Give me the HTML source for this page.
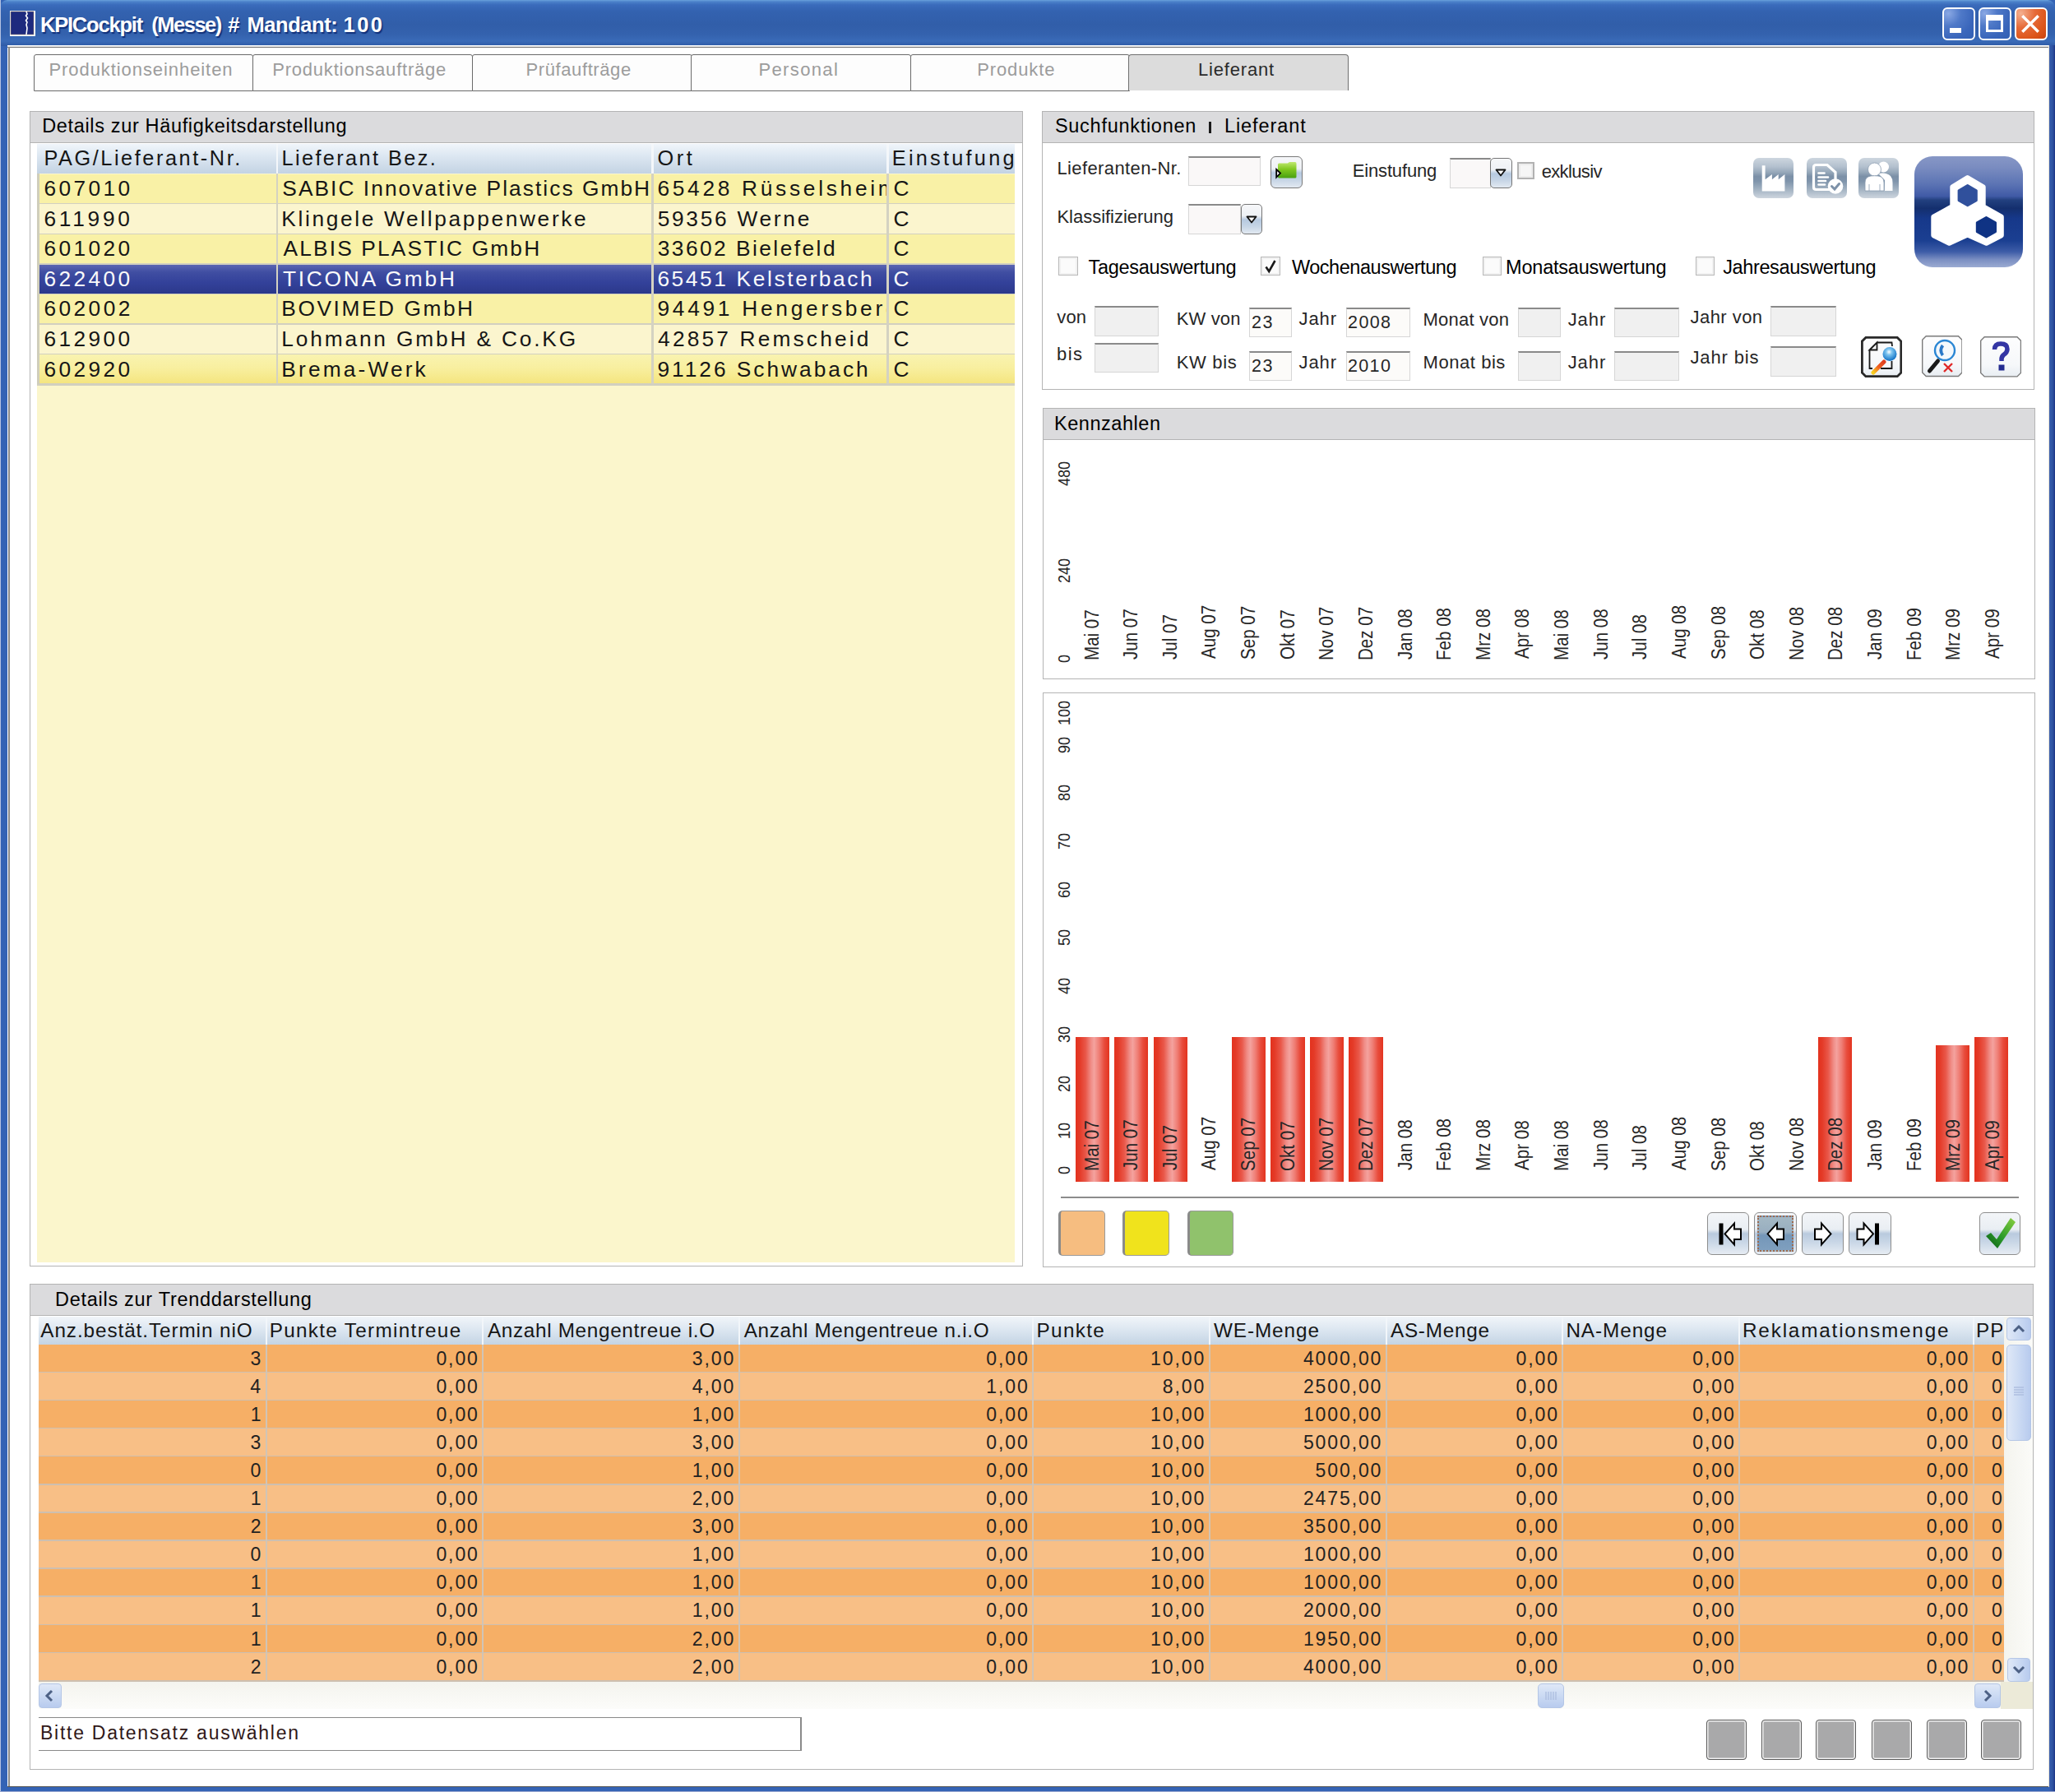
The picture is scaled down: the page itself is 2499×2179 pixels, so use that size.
<!DOCTYPE html><html><head><meta charset="utf-8"><title>KPICockpit</title><style>
*{margin:0;padding:0;box-sizing:border-box}
html,body{width:2499px;height:2179px;overflow:hidden;background:#3463b5}
body{position:relative;font-family:"Liberation Sans",sans-serif;color:#000}
.a{position:absolute}
.t{position:absolute;white-space:nowrap}
</style></head><body>
<div class="a" style="left:0.0px;top:0.0px;width:2499.0px;height:56.0px;background:linear-gradient(to bottom,#6aa2dc 0px,#4c82ca 2px,#3a6bbb 6px,#3362b0 14px,#315ea9 30px,#3462ae 42px,#3a6bb8 50px,#2f5aa6 56px);border-radius:9px 9px 0 0"></div>
<div class="a" style="left:9.0px;top:55.0px;width:2482.0px;height:2118.0px;background:#fff"></div>
<div class="a" style="left:9.0px;top:55.5px;width:2482.0px;height:2.5px;background:#777;border-top:1px solid #e6e6e6"></div>
<div class="a" style="left:10.0px;top:57.0px;width:2.0px;height:2116.0px;background:#8a8a8a"></div>
<div class="a" style="left:2490.5px;top:55.0px;width:1.2px;height:2118.0px;background:#e8e4d8"></div>
<div class="a" style="left:2491.7px;top:55.0px;width:7.3px;height:2124.0px;background:linear-gradient(to right,#3a60b0,#2e52a0 60%,#1c3486)"></div>
<div class="a" style="left:0.0px;top:0.0px;width:1.2px;height:2179.0px;background:#b4c2e2"></div>
<div class="a" style="left:0.0px;top:2177.6px;width:2499.0px;height:1.4px;background:#9aa8d2"></div>
<div class="a" style="left:9.0px;top:2171.7px;width:2482.0px;height:1.3px;background:#555"></div>
<svg class="a" style="left:12px;top:13px" width="31" height="31" viewBox="0 0 31 31"><rect x="0" y="0" width="31" height="31" fill="#fff"/><rect x="1" y="1" width="28" height="28" fill="#1e2a7e" stroke="#9a8a7a" stroke-width="0.6"/><path d="M20 1 L21 4 L19.5 6 L21.5 9 L19.5 12 L21 14 L20 17 L21 21 L20 29" stroke="#fff" stroke-width="1.6" fill="none"/></svg>
<div class="t" style="left:48.98px;top:17.61px;font-size:25.5px;line-height:25.5px;letter-spacing:-1.204px;font-weight:bold;color:#fff;text-shadow:1.5px 1.5px 1px #10307a">KPICockpit</div>
<div class="t" style="left:184.32px;top:17.61px;font-size:25.5px;line-height:25.5px;letter-spacing:-1.496px;font-weight:bold;color:#fff;text-shadow:1.5px 1.5px 1px #10307a">(Messe)</div>
<div class="t" style="left:277.25px;top:17.61px;font-size:25.5px;line-height:25.5px;letter-spacing:0.000px;font-weight:bold;color:#fff;text-shadow:1.5px 1.5px 1px #10307a">#</div>
<div class="t" style="left:300.58px;top:17.61px;font-size:25.5px;line-height:25.5px;letter-spacing:-0.449px;font-weight:bold;color:#fff;text-shadow:1.5px 1.5px 1px #10307a">Mandant:</div>
<div class="t" style="left:417.41px;top:17.61px;font-size:25.5px;line-height:25.5px;letter-spacing:2.546px;font-weight:bold;color:#fff;text-shadow:1.5px 1.5px 1px #10307a">100</div>
<div class="a" style="left:2362.0px;top:9.0px;width:39.5px;height:40.0px;border:2px solid #fff;border-radius:6px;background:radial-gradient(circle at 15% 15%,#8aa8e4 0,#4f79c8 35%,#3a66bb 70%,#3260b4 100%)"></div>
<div class="a" style="left:2406.0px;top:9.0px;width:39.5px;height:40.0px;border:2px solid #fff;border-radius:6px;background:radial-gradient(circle at 15% 15%,#8aa8e4 0,#4f79c8 35%,#3a66bb 70%,#3260b4 100%)"></div>
<div class="a" style="left:2450.0px;top:9.0px;width:39.5px;height:40.0px;border:2px solid #fff;border-radius:6px;background:radial-gradient(circle at 15% 15%,#f4b090 0,#e66a38 40%,#dc5418 75%,#c84410 100%)"></div>
<div class="a" style="left:2371.0px;top:34.0px;width:13.5px;height:5.5px;background:#fff"></div>
<div class="a" style="left:2414.7px;top:18.2px;width:21.3px;height:21.3px;border:3px solid #fff;border-top-width:7px"></div>
<svg class="a" style="left:2458px;top:17.5px" width="22" height="22" viewBox="0 0 22 22"><path d="M2.5 2.5 L19.5 19.5 M19.5 2.5 L2.5 19.5" stroke="#fff" stroke-width="3.4" stroke-linecap="square"/></svg>
<div class="a" style="left:41.0px;top:65.5px;width:267.0px;height:45.5px;background:#fdfdfd;border:1.5px solid #6a6a6a;border-radius:3px 3px 0 0"></div>
<div class="t" style="left:59.48px;top:74.08px;font-size:22px;line-height:22px;letter-spacing:0.927px;color:#9c9c9c">Produktionseinheiten</div>
<div class="a" style="left:306.5px;top:65.5px;width:268.5px;height:45.5px;background:#fdfdfd;border:1.5px solid #6a6a6a;border-radius:3px 3px 0 0"></div>
<div class="t" style="left:331.19px;top:74.08px;font-size:22px;line-height:22px;letter-spacing:0.792px;color:#9c9c9c">Produktionsaufträge</div>
<div class="a" style="left:573.5px;top:65.5px;width:268.0px;height:45.5px;background:#fdfdfd;border:1.5px solid #6a6a6a;border-radius:3px 3px 0 0"></div>
<div class="t" style="left:639.58px;top:74.08px;font-size:22px;line-height:22px;letter-spacing:0.590px;color:#9c9c9c">Prüfaufträge</div>
<div class="a" style="left:840.0px;top:65.5px;width:268.0px;height:45.5px;background:#fdfdfd;border:1.5px solid #6a6a6a;border-radius:3px 3px 0 0"></div>
<div class="t" style="left:922.38px;top:74.08px;font-size:22px;line-height:22px;letter-spacing:1.379px;color:#9c9c9c">Personal</div>
<div class="a" style="left:1106.5px;top:65.5px;width:267.0px;height:45.5px;background:#fdfdfd;border:1.5px solid #6a6a6a;border-radius:3px 3px 0 0"></div>
<div class="t" style="left:1188.18px;top:74.08px;font-size:22px;line-height:22px;letter-spacing:0.885px;color:#9c9c9c">Produkte</div>
<div class="a" style="left:1372.0px;top:65.5px;width:268.0px;height:44.5px;background:#dcdcdc;border:1.5px solid #707070;border-bottom:none;border-radius:4px 4px 0 0"></div>
<div class="t" style="left:1456.98px;top:73.98px;font-size:22px;line-height:22px;letter-spacing:0.818px;color:#2a2a2a">Lieferant</div>
<div class="a" style="left:35.7px;top:135.3px;width:1207.9px;height:1405.2px;border:1.5px solid #b4b4b4;background:#fff"></div>
<div class="a" style="left:35.7px;top:135.3px;width:1207.9px;height:38.7px;border:1.5px solid #b4b4b4;background:#dbdbdd"></div>
<div class="t" style="left:51.26px;top:142.01px;font-size:23.5px;line-height:23.5px;letter-spacing:0.651px;color:#000">Details zur Häufigkeitsdarstellung</div>
<div class="a" style="left:1267.3px;top:135.3px;width:1207.2px;height:338.7px;border:1.5px solid #b4b4b4;background:#fff"></div>
<div class="a" style="left:1267.3px;top:135.3px;width:1207.2px;height:38.7px;border:1.5px solid #b4b4b4;background:#dbdbdd"></div>
<div class="t" style="left:1282.94px;top:141.91px;font-size:23.5px;line-height:23.5px;letter-spacing:0.719px;color:#000">Suchfunktionen</div>
<div class="a" style="left:1470.2px;top:148.0px;width:2.8px;height:13.8px;background:#1a1a1a"></div>
<div class="t" style="left:1488.96px;top:141.91px;font-size:23.5px;line-height:23.5px;letter-spacing:0.930px;color:#000">Lieferant</div>
<div class="a" style="left:1267.8px;top:496.0px;width:1207.7px;height:329.5px;border:1.5px solid #b4b4b4;background:#fff"></div>
<div class="a" style="left:1267.8px;top:496.0px;width:1207.7px;height:39.0px;border:1.5px solid #b4b4b4;background:#dbdbdd"></div>
<div class="t" style="left:1282.06px;top:503.71px;font-size:23.5px;line-height:23.5px;letter-spacing:0.536px;color:#000">Kennzahlen</div>
<div class="a" style="left:1267.8px;top:841.5px;width:1207.7px;height:699.0px;border:1.5px solid #b4b4b4;background:#fff"></div>
<div class="a" style="left:35.9px;top:1561.2px;width:2437.6px;height:590.8px;border:1.5px solid #b4b4b4;background:#fff"></div>
<div class="a" style="left:35.9px;top:1561.2px;width:2437.6px;height:39.1px;border:1.5px solid #b4b4b4;background:#dbdbdd"></div>
<div class="t" style="left:67.06px;top:1568.71px;font-size:23.5px;line-height:23.5px;letter-spacing:0.712px;color:#000">Details zur Trenddarstellung</div>
<div class="a" style="left:45.1px;top:174.6px;width:1189.2px;height:1360.4px;background:#fbf6cc"></div>
<div class="a" style="left:45.1px;top:174.6px;width:1189.2px;height:36.5px;background:linear-gradient(to bottom,#f0f5fa 0%,#dfe9f3 35%,#c3d3e3 100%)"></div>
<div class="a" style="left:335.8px;top:174.6px;width:2.4px;height:36.5px;background:#f4f7fa"></div>
<div class="a" style="left:792.2px;top:174.6px;width:2.4px;height:36.5px;background:#f4f7fa"></div>
<div class="a" style="left:1078.4px;top:174.6px;width:2.4px;height:36.5px;background:#f4f7fa"></div>
<div class="t" style="left:53.41px;top:180.28px;font-size:25.3px;line-height:25.3px;letter-spacing:2.568px;color:#161616">PAG/Lieferant-Nr.</div>
<div class="t" style="left:342.41px;top:180.28px;font-size:25.3px;line-height:25.3px;letter-spacing:2.405px;color:#161616">Lieferant Bez.</div>
<div class="t" style="left:799.50px;top:180.28px;font-size:25.3px;line-height:25.3px;letter-spacing:3.594px;color:#161616">Ort</div>
<div class="t" style="left:1084.81px;top:180.28px;font-size:25.3px;line-height:25.3px;letter-spacing:3.247px;color:#161616">Einstufung</div>
<div class="a" style="left:45.1px;top:211.9px;width:1189.2px;height:36.5px;background:#f9f1a6"></div>
<div class="a" style="left:45.1px;top:247.1px;width:1189.2px;height:2.6px;background:#d2d0c0"></div>
<div class="a" style="left:45.1px;top:211.9px;width:290.7px;height:36.5px;overflow:hidden"><div class="a" style="left:-45.1px;top:-211.9px;width:2499px;height:2179px"><div class="t" style="left:53.39px;top:216.24px;font-size:26.3px;line-height:26.3px;letter-spacing:3.378px;color:#161616">607010</div></div></div>
<div class="a" style="left:337.0px;top:211.9px;width:455.2px;height:36.5px;overflow:hidden"><div class="a" style="left:-337.0px;top:-211.9px;width:2499px;height:2179px"><div class="t" style="left:343.32px;top:216.24px;font-size:26.3px;line-height:26.3px;letter-spacing:2.052px;color:#161616">SABIC Innovative Plastics GmbH</div></div></div>
<div class="a" style="left:793.4px;top:211.9px;width:285.0px;height:36.5px;overflow:hidden"><div class="a" style="left:-793.4px;top:-211.9px;width:2499px;height:2179px"><div class="t" style="left:799.38px;top:216.24px;font-size:26.3px;line-height:26.3px;letter-spacing:3.709px;color:#161616">65428 Rüsselsheim</div></div></div>
<div class="a" style="left:1079.6px;top:211.9px;width:154.7px;height:36.5px;overflow:hidden"><div class="a" style="left:-1079.6px;top:-211.9px;width:2499px;height:2179px"><div class="t" style="left:1086.38px;top:216.24px;font-size:26.3px;line-height:26.3px;letter-spacing:0.000px;color:#161616">C</div></div></div>
<div class="a" style="left:45.1px;top:248.4px;width:1189.2px;height:36.6px;background:#fbf5ce"></div>
<div class="a" style="left:45.1px;top:283.7px;width:1189.2px;height:2.6px;background:#d2d0c0"></div>
<div class="a" style="left:45.1px;top:248.4px;width:290.7px;height:36.5px;overflow:hidden"><div class="a" style="left:-45.1px;top:-248.4px;width:2499px;height:2179px"><div class="t" style="left:53.39px;top:252.79px;font-size:26.3px;line-height:26.3px;letter-spacing:3.759px;color:#161616">611990</div></div></div>
<div class="a" style="left:337.0px;top:248.4px;width:455.2px;height:36.5px;overflow:hidden"><div class="a" style="left:-337.0px;top:-248.4px;width:2499px;height:2179px"><div class="t" style="left:342.33px;top:252.79px;font-size:26.3px;line-height:26.3px;letter-spacing:2.651px;color:#161616">Klingele Wellpappenwerke</div></div></div>
<div class="a" style="left:793.4px;top:248.4px;width:285.0px;height:36.5px;overflow:hidden"><div class="a" style="left:-793.4px;top:-248.4px;width:2499px;height:2179px"><div class="t" style="left:799.65px;top:252.79px;font-size:26.3px;line-height:26.3px;letter-spacing:2.726px;color:#161616">59356 Werne</div></div></div>
<div class="a" style="left:1079.6px;top:248.4px;width:154.7px;height:36.5px;overflow:hidden"><div class="a" style="left:-1079.6px;top:-248.4px;width:2499px;height:2179px"><div class="t" style="left:1086.38px;top:252.79px;font-size:26.3px;line-height:26.3px;letter-spacing:0.000px;color:#161616">C</div></div></div>
<div class="a" style="left:45.1px;top:285.0px;width:1189.2px;height:36.6px;background:#f9f1a6"></div>
<div class="a" style="left:45.1px;top:320.2px;width:1189.2px;height:2.6px;background:#d2d0c0"></div>
<div class="a" style="left:45.1px;top:285.0px;width:290.7px;height:36.5px;overflow:hidden"><div class="a" style="left:-45.1px;top:-285.0px;width:2499px;height:2179px"><div class="t" style="left:53.39px;top:289.34px;font-size:26.3px;line-height:26.3px;letter-spacing:3.378px;color:#161616">601020</div></div></div>
<div class="a" style="left:337.0px;top:285.0px;width:455.2px;height:36.5px;overflow:hidden"><div class="a" style="left:-337.0px;top:-285.0px;width:2499px;height:2179px"><div class="t" style="left:344.43px;top:289.34px;font-size:26.3px;line-height:26.3px;letter-spacing:2.174px;color:#161616">ALBIS PLASTIC GmbH</div></div></div>
<div class="a" style="left:793.4px;top:285.0px;width:285.0px;height:36.5px;overflow:hidden"><div class="a" style="left:-793.4px;top:-285.0px;width:2499px;height:2179px"><div class="t" style="left:799.71px;top:289.34px;font-size:26.3px;line-height:26.3px;letter-spacing:2.468px;color:#161616">33602 Bielefeld</div></div></div>
<div class="a" style="left:1079.6px;top:285.0px;width:154.7px;height:36.5px;overflow:hidden"><div class="a" style="left:-1079.6px;top:-285.0px;width:2499px;height:2179px"><div class="t" style="left:1086.38px;top:289.34px;font-size:26.3px;line-height:26.3px;letter-spacing:0.000px;color:#161616">C</div></div></div>
<div class="a" style="left:45.1px;top:321.6px;width:1189.2px;height:36.6px;background:linear-gradient(to bottom,#5c66b2 0%,#404ea2 25%,#33419a 60%,#2b3889 100%)"></div>
<div class="a" style="left:45.1px;top:356.8px;width:1189.2px;height:2.6px;background:#d2d0c0"></div>
<div class="a" style="left:45.1px;top:321.6px;width:290.7px;height:36.5px;overflow:hidden"><div class="a" style="left:-45.1px;top:-321.6px;width:2499px;height:2179px"><div class="t" style="left:53.39px;top:325.89px;font-size:26.3px;line-height:26.3px;letter-spacing:3.378px;color:#fafafa">622400</div></div></div>
<div class="a" style="left:337.0px;top:321.6px;width:455.2px;height:36.5px;overflow:hidden"><div class="a" style="left:-337.0px;top:-321.6px;width:2499px;height:2179px"><div class="t" style="left:343.91px;top:325.89px;font-size:26.3px;line-height:26.3px;letter-spacing:2.785px;color:#fafafa">TICONA GmbH</div></div></div>
<div class="a" style="left:793.4px;top:321.6px;width:285.0px;height:36.5px;overflow:hidden"><div class="a" style="left:-793.4px;top:-321.6px;width:2499px;height:2179px"><div class="t" style="left:799.38px;top:325.89px;font-size:26.3px;line-height:26.3px;letter-spacing:2.624px;color:#fafafa">65451 Kelsterbach</div></div></div>
<div class="a" style="left:1079.6px;top:321.6px;width:154.7px;height:36.5px;overflow:hidden"><div class="a" style="left:-1079.6px;top:-321.6px;width:2499px;height:2179px"><div class="t" style="left:1086.38px;top:325.89px;font-size:26.3px;line-height:26.3px;letter-spacing:0.000px;color:#fafafa">C</div></div></div>
<div class="a" style="left:45.1px;top:358.1px;width:1189.2px;height:36.6px;background:#f9f1a6"></div>
<div class="a" style="left:45.1px;top:393.4px;width:1189.2px;height:2.6px;background:#d2d0c0"></div>
<div class="a" style="left:45.1px;top:358.1px;width:290.7px;height:36.5px;overflow:hidden"><div class="a" style="left:-45.1px;top:-358.1px;width:2499px;height:2179px"><div class="t" style="left:53.39px;top:362.44px;font-size:26.3px;line-height:26.3px;letter-spacing:3.444px;color:#161616">602002</div></div></div>
<div class="a" style="left:337.0px;top:358.1px;width:455.2px;height:36.5px;overflow:hidden"><div class="a" style="left:-337.0px;top:-358.1px;width:2499px;height:2179px"><div class="t" style="left:342.33px;top:362.44px;font-size:26.3px;line-height:26.3px;letter-spacing:2.566px;color:#161616">BOVIMED GmbH</div></div></div>
<div class="a" style="left:793.4px;top:358.1px;width:285.0px;height:36.5px;overflow:hidden"><div class="a" style="left:-793.4px;top:-358.1px;width:2499px;height:2179px"><div class="t" style="left:799.45px;top:362.44px;font-size:26.3px;line-height:26.3px;letter-spacing:3.731px;color:#161616">94491 Hengersberg</div></div></div>
<div class="a" style="left:1079.6px;top:358.1px;width:154.7px;height:36.5px;overflow:hidden"><div class="a" style="left:-1079.6px;top:-358.1px;width:2499px;height:2179px"><div class="t" style="left:1086.38px;top:362.44px;font-size:26.3px;line-height:26.3px;letter-spacing:0.000px;color:#161616">C</div></div></div>
<div class="a" style="left:45.1px;top:394.6px;width:1189.2px;height:36.6px;background:#fbf5ce"></div>
<div class="a" style="left:45.1px;top:429.9px;width:1189.2px;height:2.6px;background:#d2d0c0"></div>
<div class="a" style="left:45.1px;top:394.6px;width:290.7px;height:36.5px;overflow:hidden"><div class="a" style="left:-45.1px;top:-394.6px;width:2499px;height:2179px"><div class="t" style="left:53.39px;top:398.99px;font-size:26.3px;line-height:26.3px;letter-spacing:3.378px;color:#161616">612900</div></div></div>
<div class="a" style="left:337.0px;top:394.6px;width:455.2px;height:36.5px;overflow:hidden"><div class="a" style="left:-337.0px;top:-394.6px;width:2499px;height:2179px"><div class="t" style="left:342.33px;top:398.99px;font-size:26.3px;line-height:26.3px;letter-spacing:2.832px;color:#161616">Lohmann GmbH &amp; Co.KG</div></div></div>
<div class="a" style="left:793.4px;top:394.6px;width:285.0px;height:36.5px;overflow:hidden"><div class="a" style="left:-793.4px;top:-394.6px;width:2499px;height:2179px"><div class="t" style="left:800.11px;top:398.99px;font-size:26.3px;line-height:26.3px;letter-spacing:3.161px;color:#161616">42857 Remscheid</div></div></div>
<div class="a" style="left:1079.6px;top:394.6px;width:154.7px;height:36.5px;overflow:hidden"><div class="a" style="left:-1079.6px;top:-394.6px;width:2499px;height:2179px"><div class="t" style="left:1086.38px;top:398.99px;font-size:26.3px;line-height:26.3px;letter-spacing:0.000px;color:#161616">C</div></div></div>
<div class="a" style="left:45.1px;top:431.2px;width:1189.2px;height:36.6px;background:linear-gradient(to bottom,#f9f3b0 0%,#f8ef9f 45%,#f4e47c 100%)"></div>
<div class="a" style="left:45.1px;top:466.4px;width:1189.2px;height:2.6px;background:#d2d0c0"></div>
<div class="a" style="left:45.1px;top:431.2px;width:290.7px;height:36.5px;overflow:hidden"><div class="a" style="left:-45.1px;top:-431.2px;width:2499px;height:2179px"><div class="t" style="left:53.39px;top:435.54px;font-size:26.3px;line-height:26.3px;letter-spacing:3.378px;color:#161616">602920</div></div></div>
<div class="a" style="left:337.0px;top:431.2px;width:455.2px;height:36.5px;overflow:hidden"><div class="a" style="left:-337.0px;top:-431.2px;width:2499px;height:2179px"><div class="t" style="left:342.33px;top:435.54px;font-size:26.3px;line-height:26.3px;letter-spacing:3.143px;color:#161616">Brema-Werk</div></div></div>
<div class="a" style="left:793.4px;top:431.2px;width:285.0px;height:36.5px;overflow:hidden"><div class="a" style="left:-793.4px;top:-431.2px;width:2499px;height:2179px"><div class="t" style="left:799.45px;top:435.54px;font-size:26.3px;line-height:26.3px;letter-spacing:2.984px;color:#161616">91126 Schwabach</div></div></div>
<div class="a" style="left:1079.6px;top:431.2px;width:154.7px;height:36.5px;overflow:hidden"><div class="a" style="left:-1079.6px;top:-431.2px;width:2499px;height:2179px"><div class="t" style="left:1086.38px;top:435.54px;font-size:26.3px;line-height:26.3px;letter-spacing:0.000px;color:#161616">C</div></div></div>
<div class="a" style="left:335.8px;top:211.1px;width:2.4px;height:255.8px;background:#d4d2c2"></div>
<div class="a" style="left:792.2px;top:211.1px;width:2.4px;height:255.8px;background:#d4d2c2"></div>
<div class="a" style="left:1078.4px;top:211.1px;width:2.4px;height:255.8px;background:#d4d2c2"></div>
<div class="a" style="left:45.1px;top:211.1px;width:2.6px;height:255.8px;background:#d0cebb"></div>
<div class="t" style="left:1285.48px;top:193.88px;font-size:22px;line-height:22px;letter-spacing:0.390px;color:#262626">Lieferanten-Nr.</div>
<div class="a" style="left:1444.7px;top:190.3px;width:87.9px;height:35.7px;background:#faf8f8;border:1.3px solid #d6d6d6;border-top:2px solid #8a8a8a"></div>
<div class="a" style="left:1545.2px;top:190.0px;width:39.3px;height:38.8px;background:linear-gradient(to bottom,#f6f7f9 0%,#eef1f5 38%,#b6c9e0 52%,#c6d5e6 75%,#e2e9f1 100%);border:1.5px solid #7a7a7a;border-radius:6px"></div>
<svg class="a" style="left:1551px;top:196px" width="30" height="24" viewBox="0 0 30 24"><defs><linearGradient id="gf" x1="0" y1="0" x2="0" y2="1"><stop offset="0" stop-color="#c0e870"/><stop offset="0.45" stop-color="#80c820"/><stop offset="1" stop-color="#48a010"/></linearGradient></defs><path d="M3 4 Q3 2.5 4.5 2.5 L15 2.5 Q16 1 17.5 1 L24 1 Q25.5 1 25.5 3 L25.5 19 Q25.5 20.5 24 20.5 L4.5 20.5 Q3 20.5 3 19 Z" fill="url(#gf)"/><path d="M1.2 10 L6 14.5 L1.2 19.5 Z" fill="#fff" stroke="#000" stroke-width="1.8"/></svg>
<div class="t" style="left:1285.48px;top:253.08px;font-size:22px;line-height:22px;letter-spacing:-0.025px;color:#262626">Klassifizierung</div>
<div class="a" style="left:1445.0px;top:248.2px;width:64.0px;height:37.3px;background:#faf8f8;border:1.3px solid #d6d6d6;border-top:2px solid #8a8a8a"></div>
<div class="a" style="left:1508.5px;top:248.2px;width:26.5px;height:37.3px;background:linear-gradient(to bottom,#f6f7f9 0%,#eef1f5 38%,#b6c9e0 52%,#c6d5e6 75%,#e2e9f1 100%);border:1.5px solid #767676;border-radius:5px"></div>
<svg class="a" style="left:1514.8px;top:261.9px" width="14" height="10" viewBox="0 0 14 10"><path d="M1.5 1.5 L12.5 1.5 L7 8.5 Z" fill="#fff" stroke="#111" stroke-width="1.8" stroke-linejoin="round"/></svg>
<div class="t" style="left:1644.78px;top:196.78px;font-size:22px;line-height:22px;letter-spacing:-0.162px;color:#262626">Einstufung</div>
<div class="a" style="left:1763.0px;top:191.8px;width:49.5px;height:36.9px;background:#faf8f8;border:1.3px solid #d6d6d6;border-top:2px solid #8a8a8a"></div>
<div class="a" style="left:1812.0px;top:191.8px;width:26.5px;height:36.9px;background:linear-gradient(to bottom,#f6f7f9 0%,#eef1f5 38%,#b6c9e0 52%,#c6d5e6 75%,#e2e9f1 100%);border:1.5px solid #767676;border-radius:5px"></div>
<svg class="a" style="left:1818.2px;top:205.2px" width="14" height="10" viewBox="0 0 14 10"><path d="M1.5 1.5 L12.5 1.5 L7 8.5 Z" fill="#fff" stroke="#111" stroke-width="1.8" stroke-linejoin="round"/></svg>
<div class="a" style="left:1844.7px;top:197.0px;width:21.1px;height:21.0px;background:#f6f6f6;border:2px solid #b2b2b2;box-shadow:inset 0 0 0 2px #ececec"></div>
<div class="t" style="left:1874.66px;top:197.78px;font-size:22px;line-height:22px;letter-spacing:-0.639px;color:#262626">exklusiv</div>
<div class="a" style="left:2131.7px;top:191.7px;width:49.6px;height:49.6px;background:linear-gradient(to bottom,#cdd6df 0%,#b3c0ce 22%,#95a7b9 36%,#7b90a7 46%,#7f94ab 58%,#a2b2c2 78%,#cdd5de 100%);border-radius:7px"></div>
<div class="a" style="left:2196.9px;top:191.7px;width:49.6px;height:49.6px;background:linear-gradient(to bottom,#cdd6df 0%,#b3c0ce 22%,#95a7b9 36%,#7b90a7 46%,#7f94ab 58%,#a2b2c2 78%,#cdd5de 100%);border-radius:7px"></div>
<div class="a" style="left:2259.9px;top:191.7px;width:49.6px;height:49.6px;background:linear-gradient(to bottom,#cdd6df 0%,#b3c0ce 22%,#95a7b9 36%,#7b90a7 46%,#7f94ab 58%,#a2b2c2 78%,#cdd5de 100%);border-radius:7px"></div>
<svg class="a" style="left:2131.7px;top:191.7px" width="50" height="50" viewBox="0 0 50 50"><path d="M10.7 9.2 L14.6 9.2 L14.6 26.3 L22.9 19.9 L22.9 26.3 L30.7 19.9 L30.7 26.3 L38.4 19.9 L38.4 40.4 L10.7 40.4 Z" fill="#fff"/></svg>
<svg class="a" style="left:2196.9px;top:191.7px" width="50" height="50" viewBox="0 0 50 50"><path d="M11.5 8.5 L25 8.5 L35 17.5 L35 36 Q35 38.5 32.5 38.5 L11.5 38.5 Q8.5 38.5 8.5 35.5 L8.5 11.5 Q8.5 8.5 11.5 8.5 Z" fill="none" stroke="#fff" stroke-width="3.2"/><g stroke="#fff" stroke-width="2.6" stroke-linecap="round"><path d="M14.5 18.5 L21.5 18.5"/><path d="M14.5 23.5 L26 23.5"/><path d="M14.5 28 L23 28"/><path d="M14.5 32.5 L22 32.5"/></g><circle cx="35" cy="34.5" r="9.3" fill="#fff"/><path d="M30.5 34.5 L34 38 L39.5 31.5" stroke="#7d91a8" stroke-width="3" fill="none" stroke-linecap="round"/></svg>
<svg class="a" style="left:2259.9px;top:191.7px" width="50" height="50" viewBox="0 0 50 50"><circle cx="30.5" cy="11" r="6.5" fill="#fff"/><path d="M24 19 Q34 17 39 22 Q41.5 25 41.5 30 L41.5 40 L32 40 L32 27 Z" fill="#fff"/><circle cx="19.5" cy="14" r="8" fill="#fff" stroke="#8a9cb0" stroke-width="0.8"/><path d="M8 40 L8 30 Q8 23 15 22 Q19.5 21.5 24 22 Q31 23 31 30 L31 40 Z" fill="#fff" stroke="#8a9cb0" stroke-width="0.8"/><path d="M13 32 L13 40 M26 32 L26 40" stroke="#8a9cb0" stroke-width="0.8"/></svg>
<svg class="a" style="left:2328px;top:189.6px" width="132" height="135" viewBox="0 0 132 135"><defs><linearGradient id="lg" x1="0" y1="0" x2="0" y2="1"><stop offset="0" stop-color="#8797c6"/><stop offset="0.1" stop-color="#7a8cc0"/><stop offset="0.25" stop-color="#5c74b4"/><stop offset="0.36" stop-color="#405aa6"/><stop offset="0.395" stop-color="#22407f"/><stop offset="0.47" stop-color="#142f6e"/><stop offset="0.56" stop-color="#16388a"/><stop offset="0.76" stop-color="#1b3f91"/><stop offset="0.86" stop-color="#3d5ca7"/><stop offset="0.93" stop-color="#7a8ec2"/><stop offset="1" stop-color="#9babd2"/></linearGradient></defs><rect x="0" y="0" width="132" height="135" rx="22" fill="url(#lg)"/><path d="M64.6 26 L83.7 37.3 L83.7 61 L105.8 73.7 L105.8 96.3 L87.5 105.8 L64.6 95.6 L42.4 105.8 L23.3 96.3 L23.3 73.7 L46.3 61 L46.3 37.3 Z" fill="#fff" stroke="#fff" stroke-width="6" stroke-linejoin="round"/><path d="M64.7 35.5 L75.3 41.8 L75.3 53.8 L64.7 59.7 L54.1 53.8 L54.1 41.8 Z" fill="#30509c" stroke="#30509c" stroke-width="3" stroke-linejoin="round"/><path d="M87.4 74.5 L98.5 80.8 L98.5 91.8 L87.4 98 L76.3 91.8 L76.3 80.8 Z" fill="#0f3384" stroke="#0f3384" stroke-width="3" stroke-linejoin="round"/></svg>
<div class="a" style="left:1287.0px;top:311.8px;width:23.5px;height:23.7px;background:#fbfbfb;border:1.5px solid #b8b8b8;box-shadow:inset 0 0 0 2px #f1f1f1"></div>
<div class="t" style="left:1323.47px;top:313.71px;font-size:23.5px;line-height:23.5px;letter-spacing:-0.299px;color:#000">Tagesauswertung</div>
<div class="a" style="left:1533.0px;top:311.8px;width:23.5px;height:23.7px;background:#fbfbfb;border:1.5px solid #b8b8b8;box-shadow:inset 0 0 0 2px #f1f1f1"></div>
<svg class="a" style="left:1537.0px;top:314.8px" width="16" height="18" viewBox="0 0 16 18"><path d="M2.5 9.5 L6.2 15 L13.5 2" stroke="#1a1a1a" stroke-width="2.6" fill="none"/></svg>
<div class="t" style="left:1570.88px;top:313.71px;font-size:23.5px;line-height:23.5px;letter-spacing:-0.446px;color:#000">Wochenauswertung</div>
<div class="a" style="left:1802.5px;top:311.8px;width:23.5px;height:23.7px;background:#fbfbfb;border:1.5px solid #b8b8b8;box-shadow:inset 0 0 0 2px #f1f1f1"></div>
<div class="t" style="left:1831.06px;top:313.71px;font-size:23.5px;line-height:23.5px;letter-spacing:-0.207px;color:#000">Monatsauswertung</div>
<div class="a" style="left:2061.5px;top:311.8px;width:23.5px;height:23.7px;background:#fbfbfb;border:1.5px solid #b8b8b8;box-shadow:inset 0 0 0 2px #f1f1f1"></div>
<div class="t" style="left:2095.25px;top:313.71px;font-size:23.5px;line-height:23.5px;letter-spacing:-0.385px;color:#000">Jahresauswertung</div>
<div class="t" style="left:1285.35px;top:375.28px;font-size:22px;line-height:22px;letter-spacing:0.105px;color:#262626">von</div>
<div class="a" style="left:1331.4px;top:371.9px;width:78.1px;height:37.0px;background:#f0f0f0;border:1.3px solid #d6d6d6;border-top:2px solid #8a8a8a"></div>
<div class="t" style="left:1284.97px;top:420.28px;font-size:22px;line-height:22px;letter-spacing:1.497px;color:#262626">bis</div>
<div class="a" style="left:1331.4px;top:417.0px;width:78.1px;height:35.8px;background:#f0f0f0;border:1.3px solid #d6d6d6;border-top:2px solid #8a8a8a"></div>
<div class="t" style="left:1430.68px;top:377.38px;font-size:22px;line-height:22px;letter-spacing:0.138px;color:#262626">KW von</div>
<div class="a" style="left:1519.4px;top:374.0px;width:51.8px;height:36.4px;background:#fcfbf9;border:1.3px solid #d6d6d6;border-top:2px solid #8a8a8a"></div>
<div class="t" style="left:1430.68px;top:429.88px;font-size:22px;line-height:22px;letter-spacing:0.680px;color:#262626">KW bis</div>
<div class="a" style="left:1519.4px;top:427.0px;width:51.8px;height:36.0px;background:#fcfbf9;border:1.3px solid #d6d6d6;border-top:2px solid #8a8a8a"></div>
<div class="t" style="left:1521.92px;top:381.50px;font-size:21.5px;line-height:21.5px;letter-spacing:1.724px;color:#262626">23</div>
<div class="t" style="left:1521.92px;top:434.60px;font-size:21.5px;line-height:21.5px;letter-spacing:1.724px;color:#262626">23</div>
<div class="t" style="left:1579.47px;top:377.38px;font-size:22px;line-height:22px;letter-spacing:0.957px;color:#262626">Jahr</div>
<div class="a" style="left:1636.5px;top:374.0px;width:78.2px;height:36.4px;background:#fcfbf9;border:1.3px solid #d6d6d6;border-top:2px solid #8a8a8a"></div>
<div class="t" style="left:1579.47px;top:429.88px;font-size:22px;line-height:22px;letter-spacing:0.957px;color:#262626">Jahr</div>
<div class="a" style="left:1636.5px;top:427.0px;width:78.2px;height:36.0px;background:#fcfbf9;border:1.3px solid #d6d6d6;border-top:2px solid #8a8a8a"></div>
<div class="t" style="left:1639.12px;top:381.50px;font-size:21.5px;line-height:21.5px;letter-spacing:1.335px;color:#262626">2008</div>
<div class="t" style="left:1639.12px;top:434.60px;font-size:21.5px;line-height:21.5px;letter-spacing:1.299px;color:#262626">2010</div>
<div class="t" style="left:1730.59px;top:377.88px;font-size:22px;line-height:22px;letter-spacing:0.201px;color:#262626">Monat von</div>
<div class="a" style="left:1845.6px;top:374.0px;width:52.4px;height:36.1px;background:#f0f0f0;border:1.3px solid #d6d6d6;border-top:2px solid #8a8a8a"></div>
<div class="t" style="left:1730.59px;top:430.18px;font-size:22px;line-height:22px;letter-spacing:0.552px;color:#262626">Monat bis</div>
<div class="a" style="left:1845.6px;top:427.0px;width:52.4px;height:36.0px;background:#f0f0f0;border:1.3px solid #d6d6d6;border-top:2px solid #8a8a8a"></div>
<div class="t" style="left:1906.67px;top:377.88px;font-size:22px;line-height:22px;letter-spacing:0.957px;color:#262626">Jahr</div>
<div class="a" style="left:1962.5px;top:374.0px;width:79.5px;height:36.1px;background:#f0f0f0;border:1.3px solid #d6d6d6;border-top:2px solid #8a8a8a"></div>
<div class="t" style="left:1906.67px;top:430.18px;font-size:22px;line-height:22px;letter-spacing:0.957px;color:#262626">Jahr</div>
<div class="a" style="left:1962.5px;top:427.0px;width:79.5px;height:36.0px;background:#f0f0f0;border:1.3px solid #d6d6d6;border-top:2px solid #8a8a8a"></div>
<div class="t" style="left:2055.47px;top:375.28px;font-size:22px;line-height:22px;letter-spacing:0.462px;color:#262626">Jahr von</div>
<div class="a" style="left:2153.3px;top:372.2px;width:79.5px;height:36.6px;background:#f0f0f0;border:1.3px solid #d6d6d6;border-top:2px solid #8a8a8a"></div>
<div class="t" style="left:2055.47px;top:424.28px;font-size:22px;line-height:22px;letter-spacing:0.864px;color:#262626">Jahr bis</div>
<div class="a" style="left:2153.3px;top:421.2px;width:79.5px;height:36.7px;background:#f0f0f0;border:1.3px solid #d6d6d6;border-top:2px solid #8a8a8a"></div>
<svg class="a" style="left:2262.8px;top:408.9px" width="50.2" height="50.1" viewBox="0 0 50.2 50.1"><defs><linearGradient id="bf2262" x1="0" y1="0" x2="0" y2="1"><stop offset="0" stop-color="#fdfdfe"/><stop offset="0.7" stop-color="#f6f8fa"/><stop offset="1" stop-color="#e8edf2"/></linearGradient></defs><path d="M5.9 1.4 L44.29999999999982 1.4 L48.79999999999982 5.9 L48.79999999999982 44.200000000000024 L44.29999999999982 48.700000000000024 L5.9 48.700000000000024 L1.4 44.200000000000024 L1.4 5.9 Z" fill="url(#bf2262)" stroke="#2a2a2a" stroke-width="2.8"/></svg>
<svg class="a" style="left:2336.6px;top:408.4px" width="49.7" height="50.2" viewBox="0 0 49.7 50.2"><defs><linearGradient id="bf2336" x1="0" y1="0" x2="0" y2="1"><stop offset="0" stop-color="#fdfdfe"/><stop offset="0.7" stop-color="#f6f8fa"/><stop offset="1" stop-color="#e8edf2"/></linearGradient></defs><path d="M5.2 0.7 L44.50000000000027 0.7 L49.00000000000027 5.2 L49.00000000000027 45.00000000000004 L44.50000000000027 49.50000000000004 L5.2 49.50000000000004 L0.7 45.00000000000004 L0.7 5.2 Z" fill="url(#bf2336)" stroke="#7a7a7a" stroke-width="1.4"/></svg>
<svg class="a" style="left:2408.3px;top:409.4px" width="50.2" height="49.6" viewBox="0 0 50.2 49.6"><defs><linearGradient id="bf2408" x1="0" y1="0" x2="0" y2="1"><stop offset="0" stop-color="#fdfdfe"/><stop offset="0.7" stop-color="#f6f8fa"/><stop offset="1" stop-color="#e8edf2"/></linearGradient></defs><path d="M5.2 0.7 L44.999999999999815 0.7 L49.499999999999815 5.2 L49.499999999999815 44.40000000000002 L44.999999999999815 48.90000000000002 L5.2 48.90000000000002 L0.7 44.40000000000002 L0.7 5.2 Z" fill="url(#bf2408)" stroke="#7a7a7a" stroke-width="1.4"/></svg>
<svg class="a" style="left:2262.8px;top:408.9px" width="50" height="50" viewBox="0 0 50 50"><defs><radialGradient id="sph" cx="0.45" cy="0.35" r="0.6"><stop offset="0" stop-color="#ffffff"/><stop offset="0.35" stop-color="#7cc4f0"/><stop offset="1" stop-color="#1a78c8"/></radialGradient><linearGradient id="hd" x1="0" y1="1" x2="1" y2="0"><stop offset="0" stop-color="#f8d020"/><stop offset="0.5" stop-color="#f06020"/><stop offset="1" stop-color="#e04020"/></linearGradient></defs><path d="M19.5 7.5 L37.5 7.5 L38 12 M10.5 16.5 L19.5 7.5 L19.5 16.5 Z M10.5 16.5 L10.5 39 L14 39 M37.5 30 L37.5 39 L24 39" fill="none" stroke="#1a1a1a" stroke-width="1.8"/><circle cx="35" cy="21.5" r="8.5" fill="url(#sph)"/><path d="M15 44 L28 31" stroke="url(#hd)" stroke-width="5" stroke-linecap="round"/></svg>
<svg class="a" style="left:2336.6px;top:408.4px" width="50" height="50" viewBox="0 0 50 50"><circle cx="28" cy="18" r="12" fill="#f4f8fc" stroke="#2a86d4" stroke-width="2.4"/><path d="M25.5 12 Q21 18 25.5 24" stroke="#2a78c8" stroke-width="3.8" fill="none"/><path d="M9.5 43 L19.5 31" stroke="#1a1a1a" stroke-width="5" stroke-linecap="round"/><path d="M27 34 L37 44 M37 34 L27 44" stroke="#e02828" stroke-width="2.4"/></svg>
<svg class="a" style="left:2408.3px;top:409.4px" width="50" height="50" viewBox="0 0 50 50"><path d="M17.5 16 Q17.5 9 25 9 Q33 9 33 15.5 Q33 19.5 28.5 22.5 Q26 24.5 26 28 L26 30" fill="none" stroke="#3436a4" stroke-width="5.5"/><rect x="22.5" y="34.5" width="7" height="7" fill="#242c90"/></svg>
<div class="t" style="left:1282.97px;top:590.71px;font-size:21px;line-height:21px;transform-origin:0 0;transform:rotate(-90deg) scaleX(0.86);color:#262626">480</div>
<div class="t" style="left:1282.97px;top:709.30px;font-size:21px;line-height:21px;transform-origin:0 0;transform:rotate(-90deg) scaleX(0.86);color:#262626">240</div>
<div class="t" style="left:1282.97px;top:806.02px;font-size:21px;line-height:21px;transform-origin:0 0;transform:rotate(-90deg) scaleX(0.86);color:#262626">0</div>
<div class="t" style="left:1316.63px;top:802.90px;font-size:23.5px;line-height:23.5px;transform-origin:0 0;transform:rotate(-90deg) scaleX(0.875);color:#262626">Mai 07</div>
<div class="t" style="left:1364.25px;top:801.51px;font-size:23.5px;line-height:23.5px;transform-origin:0 0;transform:rotate(-90deg) scaleX(0.875);color:#262626">Jun 07</div>
<div class="t" style="left:1411.87px;top:801.51px;font-size:23.5px;line-height:23.5px;transform-origin:0 0;transform:rotate(-90deg) scaleX(0.875);color:#262626">Jul 07</div>
<div class="t" style="left:1459.49px;top:801.25px;font-size:23.5px;line-height:23.5px;transform-origin:0 0;transform:rotate(-90deg) scaleX(0.875);color:#262626">Aug 07</div>
<div class="t" style="left:1507.11px;top:802.13px;font-size:23.5px;line-height:23.5px;transform-origin:0 0;transform:rotate(-90deg) scaleX(0.875);color:#262626">Sep 07</div>
<div class="t" style="left:1554.73px;top:802.18px;font-size:23.5px;line-height:23.5px;transform-origin:0 0;transform:rotate(-90deg) scaleX(0.875);color:#262626">Okt 07</div>
<div class="t" style="left:1602.35px;top:802.90px;font-size:23.5px;line-height:23.5px;transform-origin:0 0;transform:rotate(-90deg) scaleX(0.875);color:#262626">Nov 07</div>
<div class="t" style="left:1649.97px;top:802.90px;font-size:23.5px;line-height:23.5px;transform-origin:0 0;transform:rotate(-90deg) scaleX(0.875);color:#262626">Dez 07</div>
<div class="t" style="left:1697.59px;top:801.51px;font-size:23.5px;line-height:23.5px;transform-origin:0 0;transform:rotate(-90deg) scaleX(0.875);color:#262626">Jan 08</div>
<div class="t" style="left:1745.21px;top:802.90px;font-size:23.5px;line-height:23.5px;transform-origin:0 0;transform:rotate(-90deg) scaleX(0.875);color:#262626">Feb 08</div>
<div class="t" style="left:1792.83px;top:802.90px;font-size:23.5px;line-height:23.5px;transform-origin:0 0;transform:rotate(-90deg) scaleX(0.875);color:#262626">Mrz 08</div>
<div class="t" style="left:1840.45px;top:801.25px;font-size:23.5px;line-height:23.5px;transform-origin:0 0;transform:rotate(-90deg) scaleX(0.875);color:#262626">Apr 08</div>
<div class="t" style="left:1888.07px;top:802.90px;font-size:23.5px;line-height:23.5px;transform-origin:0 0;transform:rotate(-90deg) scaleX(0.875);color:#262626">Mai 08</div>
<div class="t" style="left:1935.69px;top:801.51px;font-size:23.5px;line-height:23.5px;transform-origin:0 0;transform:rotate(-90deg) scaleX(0.875);color:#262626">Jun 08</div>
<div class="t" style="left:1983.31px;top:801.51px;font-size:23.5px;line-height:23.5px;transform-origin:0 0;transform:rotate(-90deg) scaleX(0.875);color:#262626">Jul 08</div>
<div class="t" style="left:2030.93px;top:801.25px;font-size:23.5px;line-height:23.5px;transform-origin:0 0;transform:rotate(-90deg) scaleX(0.875);color:#262626">Aug 08</div>
<div class="t" style="left:2078.55px;top:802.13px;font-size:23.5px;line-height:23.5px;transform-origin:0 0;transform:rotate(-90deg) scaleX(0.875);color:#262626">Sep 08</div>
<div class="t" style="left:2126.17px;top:802.18px;font-size:23.5px;line-height:23.5px;transform-origin:0 0;transform:rotate(-90deg) scaleX(0.875);color:#262626">Okt 08</div>
<div class="t" style="left:2173.79px;top:802.90px;font-size:23.5px;line-height:23.5px;transform-origin:0 0;transform:rotate(-90deg) scaleX(0.875);color:#262626">Nov 08</div>
<div class="t" style="left:2221.41px;top:802.90px;font-size:23.5px;line-height:23.5px;transform-origin:0 0;transform:rotate(-90deg) scaleX(0.875);color:#262626">Dez 08</div>
<div class="t" style="left:2269.03px;top:801.51px;font-size:23.5px;line-height:23.5px;transform-origin:0 0;transform:rotate(-90deg) scaleX(0.875);color:#262626">Jan 09</div>
<div class="t" style="left:2316.65px;top:802.90px;font-size:23.5px;line-height:23.5px;transform-origin:0 0;transform:rotate(-90deg) scaleX(0.875);color:#262626">Feb 09</div>
<div class="t" style="left:2364.27px;top:802.90px;font-size:23.5px;line-height:23.5px;transform-origin:0 0;transform:rotate(-90deg) scaleX(0.875);color:#262626">Mrz 09</div>
<div class="t" style="left:2411.89px;top:801.25px;font-size:23.5px;line-height:23.5px;transform-origin:0 0;transform:rotate(-90deg) scaleX(0.875);color:#262626">Apr 09</div>
<div class="a" style="left:1307.6px;top:1260.8px;width:41.3px;height:176.4px;background:linear-gradient(to right,#e3321e 0%,#e43a27 12%,#e9584a 30%,#f08e88 46%,#f4a29e 55%,#ef7d74 70%,#e84c3c 85%,#e3341f 100%)"></div>
<div class="a" style="left:1355.1px;top:1260.8px;width:41.3px;height:176.4px;background:linear-gradient(to right,#e3321e 0%,#e43a27 12%,#e9584a 30%,#f08e88 46%,#f4a29e 55%,#ef7d74 70%,#e84c3c 85%,#e3341f 100%)"></div>
<div class="a" style="left:1402.7px;top:1260.8px;width:41.3px;height:176.4px;background:linear-gradient(to right,#e3321e 0%,#e43a27 12%,#e9584a 30%,#f08e88 46%,#f4a29e 55%,#ef7d74 70%,#e84c3c 85%,#e3341f 100%)"></div>
<div class="a" style="left:1497.8px;top:1260.8px;width:41.3px;height:176.4px;background:linear-gradient(to right,#e3321e 0%,#e43a27 12%,#e9584a 30%,#f08e88 46%,#f4a29e 55%,#ef7d74 70%,#e84c3c 85%,#e3341f 100%)"></div>
<div class="a" style="left:1545.3px;top:1260.8px;width:41.3px;height:176.4px;background:linear-gradient(to right,#e3321e 0%,#e43a27 12%,#e9584a 30%,#f08e88 46%,#f4a29e 55%,#ef7d74 70%,#e84c3c 85%,#e3341f 100%)"></div>
<div class="a" style="left:1592.9px;top:1260.8px;width:41.3px;height:176.4px;background:linear-gradient(to right,#e3321e 0%,#e43a27 12%,#e9584a 30%,#f08e88 46%,#f4a29e 55%,#ef7d74 70%,#e84c3c 85%,#e3341f 100%)"></div>
<div class="a" style="left:1640.4px;top:1260.8px;width:41.3px;height:176.4px;background:linear-gradient(to right,#e3321e 0%,#e43a27 12%,#e9584a 30%,#f08e88 46%,#f4a29e 55%,#ef7d74 70%,#e84c3c 85%,#e3341f 100%)"></div>
<div class="a" style="left:2211.0px;top:1260.8px;width:41.3px;height:176.4px;background:linear-gradient(to right,#e3321e 0%,#e43a27 12%,#e9584a 30%,#f08e88 46%,#f4a29e 55%,#ef7d74 70%,#e84c3c 85%,#e3341f 100%)"></div>
<div class="a" style="left:2353.7px;top:1271.0px;width:41.3px;height:166.2px;background:linear-gradient(to right,#e3321e 0%,#e43a27 12%,#e9584a 30%,#f08e88 46%,#f4a29e 55%,#ef7d74 70%,#e84c3c 85%,#e3341f 100%)"></div>
<div class="a" style="left:2401.2px;top:1260.8px;width:41.3px;height:176.4px;background:linear-gradient(to right,#e3321e 0%,#e43a27 12%,#e9584a 30%,#f08e88 46%,#f4a29e 55%,#ef7d74 70%,#e84c3c 85%,#e3341f 100%)"></div>
<div class="t" style="left:1282.97px;top:881.90px;font-size:21px;line-height:21px;transform-origin:0 0;transform:rotate(-90deg) scaleX(0.86);color:#262626">100</div>
<div class="t" style="left:1282.97px;top:916.41px;font-size:21px;line-height:21px;transform-origin:0 0;transform:rotate(-90deg) scaleX(0.86);color:#262626">90</div>
<div class="t" style="left:1282.97px;top:974.37px;font-size:21px;line-height:21px;transform-origin:0 0;transform:rotate(-90deg) scaleX(0.86);color:#262626">80</div>
<div class="t" style="left:1282.97px;top:1033.14px;font-size:21px;line-height:21px;transform-origin:0 0;transform:rotate(-90deg) scaleX(0.86);color:#262626">70</div>
<div class="t" style="left:1282.97px;top:1091.94px;font-size:21px;line-height:21px;transform-origin:0 0;transform:rotate(-90deg) scaleX(0.86);color:#262626">60</div>
<div class="t" style="left:1282.97px;top:1149.85px;font-size:21px;line-height:21px;transform-origin:0 0;transform:rotate(-90deg) scaleX(0.86);color:#262626">50</div>
<div class="t" style="left:1282.97px;top:1209.39px;font-size:21px;line-height:21px;transform-origin:0 0;transform:rotate(-90deg) scaleX(0.86);color:#262626">40</div>
<div class="t" style="left:1282.97px;top:1268.42px;font-size:21px;line-height:21px;transform-origin:0 0;transform:rotate(-90deg) scaleX(0.86);color:#262626">30</div>
<div class="t" style="left:1282.97px;top:1327.64px;font-size:21px;line-height:21px;transform-origin:0 0;transform:rotate(-90deg) scaleX(0.86);color:#262626">20</div>
<div class="t" style="left:1282.97px;top:1384.56px;font-size:21px;line-height:21px;transform-origin:0 0;transform:rotate(-90deg) scaleX(0.86);color:#262626">10</div>
<div class="t" style="left:1282.97px;top:1427.53px;font-size:21px;line-height:21px;transform-origin:0 0;transform:rotate(-90deg) scaleX(0.86);color:#262626">0</div>
<div class="t" style="left:1316.63px;top:1424.30px;font-size:23.5px;line-height:23.5px;transform-origin:0 0;transform:rotate(-90deg) scaleX(0.875);color:#262626">Mai 07</div>
<div class="t" style="left:1364.25px;top:1422.91px;font-size:23.5px;line-height:23.5px;transform-origin:0 0;transform:rotate(-90deg) scaleX(0.875);color:#262626">Jun 07</div>
<div class="t" style="left:1411.87px;top:1422.91px;font-size:23.5px;line-height:23.5px;transform-origin:0 0;transform:rotate(-90deg) scaleX(0.875);color:#262626">Jul 07</div>
<div class="t" style="left:1459.49px;top:1422.65px;font-size:23.5px;line-height:23.5px;transform-origin:0 0;transform:rotate(-90deg) scaleX(0.875);color:#262626">Aug 07</div>
<div class="t" style="left:1507.11px;top:1423.53px;font-size:23.5px;line-height:23.5px;transform-origin:0 0;transform:rotate(-90deg) scaleX(0.875);color:#262626">Sep 07</div>
<div class="t" style="left:1554.73px;top:1423.58px;font-size:23.5px;line-height:23.5px;transform-origin:0 0;transform:rotate(-90deg) scaleX(0.875);color:#262626">Okt 07</div>
<div class="t" style="left:1602.35px;top:1424.30px;font-size:23.5px;line-height:23.5px;transform-origin:0 0;transform:rotate(-90deg) scaleX(0.875);color:#262626">Nov 07</div>
<div class="t" style="left:1649.97px;top:1424.30px;font-size:23.5px;line-height:23.5px;transform-origin:0 0;transform:rotate(-90deg) scaleX(0.875);color:#262626">Dez 07</div>
<div class="t" style="left:1697.59px;top:1422.91px;font-size:23.5px;line-height:23.5px;transform-origin:0 0;transform:rotate(-90deg) scaleX(0.875);color:#262626">Jan 08</div>
<div class="t" style="left:1745.21px;top:1424.30px;font-size:23.5px;line-height:23.5px;transform-origin:0 0;transform:rotate(-90deg) scaleX(0.875);color:#262626">Feb 08</div>
<div class="t" style="left:1792.83px;top:1424.30px;font-size:23.5px;line-height:23.5px;transform-origin:0 0;transform:rotate(-90deg) scaleX(0.875);color:#262626">Mrz 08</div>
<div class="t" style="left:1840.45px;top:1422.65px;font-size:23.5px;line-height:23.5px;transform-origin:0 0;transform:rotate(-90deg) scaleX(0.875);color:#262626">Apr 08</div>
<div class="t" style="left:1888.07px;top:1424.30px;font-size:23.5px;line-height:23.5px;transform-origin:0 0;transform:rotate(-90deg) scaleX(0.875);color:#262626">Mai 08</div>
<div class="t" style="left:1935.69px;top:1422.91px;font-size:23.5px;line-height:23.5px;transform-origin:0 0;transform:rotate(-90deg) scaleX(0.875);color:#262626">Jun 08</div>
<div class="t" style="left:1983.31px;top:1422.91px;font-size:23.5px;line-height:23.5px;transform-origin:0 0;transform:rotate(-90deg) scaleX(0.875);color:#262626">Jul 08</div>
<div class="t" style="left:2030.93px;top:1422.65px;font-size:23.5px;line-height:23.5px;transform-origin:0 0;transform:rotate(-90deg) scaleX(0.875);color:#262626">Aug 08</div>
<div class="t" style="left:2078.55px;top:1423.53px;font-size:23.5px;line-height:23.5px;transform-origin:0 0;transform:rotate(-90deg) scaleX(0.875);color:#262626">Sep 08</div>
<div class="t" style="left:2126.17px;top:1423.58px;font-size:23.5px;line-height:23.5px;transform-origin:0 0;transform:rotate(-90deg) scaleX(0.875);color:#262626">Okt 08</div>
<div class="t" style="left:2173.79px;top:1424.30px;font-size:23.5px;line-height:23.5px;transform-origin:0 0;transform:rotate(-90deg) scaleX(0.875);color:#262626">Nov 08</div>
<div class="t" style="left:2221.41px;top:1424.30px;font-size:23.5px;line-height:23.5px;transform-origin:0 0;transform:rotate(-90deg) scaleX(0.875);color:#262626">Dez 08</div>
<div class="t" style="left:2269.03px;top:1422.91px;font-size:23.5px;line-height:23.5px;transform-origin:0 0;transform:rotate(-90deg) scaleX(0.875);color:#262626">Jan 09</div>
<div class="t" style="left:2316.65px;top:1424.30px;font-size:23.5px;line-height:23.5px;transform-origin:0 0;transform:rotate(-90deg) scaleX(0.875);color:#262626">Feb 09</div>
<div class="t" style="left:2364.27px;top:1424.30px;font-size:23.5px;line-height:23.5px;transform-origin:0 0;transform:rotate(-90deg) scaleX(0.875);color:#262626">Mrz 09</div>
<div class="t" style="left:2411.89px;top:1422.65px;font-size:23.5px;line-height:23.5px;transform-origin:0 0;transform:rotate(-90deg) scaleX(0.875);color:#262626">Apr 09</div>
<div class="a" style="left:1290.0px;top:1455.0px;width:1165.0px;height:2.0px;background:#8c8c8c"></div>
<div class="a" style="left:1287.4px;top:1471.7px;width:56.5px;height:55.1px;background:#f6bd80;border:1.5px solid #9a9a9a;border-left:3px solid #8a8a8a;border-radius:5px"></div>
<div class="a" style="left:1365.0px;top:1471.7px;width:56.5px;height:55.1px;background:#f0e31c;border:1.5px solid #9a9a9a;border-left:3px solid #8a8a8a;border-radius:5px"></div>
<div class="a" style="left:1443.7px;top:1471.7px;width:56.5px;height:55.1px;background:#90c26c;border:1.5px solid #9a9a9a;border-left:3px solid #8a8a8a;border-radius:5px"></div>
<div class="a" style="left:2075.7px;top:1473.8px;width:51.6px;height:51.9px;background:linear-gradient(to bottom,#f3f5f8 0%,#e9eef3 40%,#b9cade 50%,#c8d6e6 70%,#e6ecf3 100%);border:1.5px solid #8e8e8e;border-radius:6px"></div>
<div class="a" style="left:2133.0px;top:1473.8px;width:51.6px;height:51.9px;background:linear-gradient(to bottom,#f3f5f8 0%,#e9eef3 40%,#b9cade 50%,#c8d6e6 70%,#e6ecf3 100%);border:1.5px solid #8e8e8e;border-radius:6px"></div>
<div class="a" style="left:2190.5px;top:1473.8px;width:51.6px;height:51.9px;background:linear-gradient(to bottom,#f3f5f8 0%,#e9eef3 40%,#b9cade 50%,#c8d6e6 70%,#e6ecf3 100%);border:1.5px solid #8e8e8e;border-radius:6px"></div>
<div class="a" style="left:2248.0px;top:1473.8px;width:51.6px;height:51.9px;background:linear-gradient(to bottom,#f3f5f8 0%,#e9eef3 40%,#b9cade 50%,#c8d6e6 70%,#e6ecf3 100%);border:1.5px solid #8e8e8e;border-radius:6px"></div>
<div class="a" style="left:2137.0px;top:1477.5px;width:43.7px;height:44.0px;background:linear-gradient(to bottom,#a4b8c4 0%,#98aec0 45%,#7496b8 55%,#7f9fbf 100%);border:2px dotted #9c6a50"></div>
<svg class="a" style="left:2075.7px;top:1473.8px" width="52" height="52" viewBox="0 0 52 52"><path d="M21.5 26.3 L33 13.6 L33 20.4 L41 20.4 L41 33.1 L33 33.1 L33 39.4 Z" fill="#fff" stroke="#000" stroke-width="2" stroke-linejoin="miter"/><rect x="14.5" y="13.5" width="5" height="26" fill="#000"/></svg>
<svg class="a" style="left:2133.0px;top:1473.8px" width="52" height="52" viewBox="0 0 52 52"><path d="M16.5 26.3 L28 13.6 L28 20.4 L36 20.4 L36 33.1 L28 33.1 L28 39.4 Z" fill="#fff" stroke="#000" stroke-width="2" stroke-linejoin="miter"/></svg>
<svg class="a" style="left:2190.5px;top:1473.8px" width="52" height="52" viewBox="0 0 52 52"><path d="M35.5 26.3 L24 13.6 L24 20.4 L16 20.4 L16 33.1 L24 33.1 L24 39.4 Z" fill="#fff" stroke="#000" stroke-width="2" stroke-linejoin="miter"/></svg>
<svg class="a" style="left:2248.0px;top:1473.8px" width="52" height="52" viewBox="0 0 52 52"><path d="M30 26.3 L18.5 13.6 L18.5 20.4 L10.5 20.4 L10.5 33.1 L18.5 33.1 L18.5 39.4 Z" fill="#fff" stroke="#000" stroke-width="2" stroke-linejoin="miter"/><rect x="32" y="13.5" width="5" height="26" fill="#000"/></svg>
<div class="a" style="left:2406.6px;top:1473.8px;width:50.6px;height:51.9px;background:linear-gradient(to bottom,#f3f5f8 0%,#e9eef3 40%,#b9cade 50%,#c8d6e6 70%,#e6ecf3 100%);border:1.5px solid #8e8e8e;border-radius:6px"></div>
<svg class="a" style="left:2406.6px;top:1473.8px" width="51" height="52" viewBox="0 0 51 52"><defs><linearGradient id="ck" x1="0" y1="1" x2="1" y2="0"><stop offset="0" stop-color="#0a5a14"/><stop offset="0.45" stop-color="#2a9a2a"/><stop offset="1" stop-color="#8ad040"/></linearGradient></defs><path d="M8 29 L14 25 L21 33 L38 7 L44 12 L22 44 Z" fill="url(#ck)" stroke-linejoin="round"/></svg>
<div class="a" style="left:47.0px;top:1601.0px;width:2390.0px;height:33.6px;background:linear-gradient(to bottom,#f1f5f9 0%,#dde7f1 45%,#c4d4e4 100%)"></div>
<div class="a" style="left:322.6px;top:1601.0px;width:2.0px;height:33.6px;background:#f2f6fa"></div>
<div class="a" style="left:586.2px;top:1601.0px;width:2.0px;height:33.6px;background:#f2f6fa"></div>
<div class="a" style="left:897.5px;top:1601.0px;width:2.0px;height:33.6px;background:#f2f6fa"></div>
<div class="a" style="left:1255.0px;top:1601.0px;width:2.0px;height:33.6px;background:#f2f6fa"></div>
<div class="a" style="left:1469.6px;top:1601.0px;width:2.0px;height:33.6px;background:#f2f6fa"></div>
<div class="a" style="left:1684.7px;top:1601.0px;width:2.0px;height:33.6px;background:#f2f6fa"></div>
<div class="a" style="left:1899.3px;top:1601.0px;width:2.0px;height:33.6px;background:#f2f6fa"></div>
<div class="a" style="left:2114.0px;top:1601.0px;width:2.0px;height:33.6px;background:#f2f6fa"></div>
<div class="a" style="left:2398.6px;top:1601.0px;width:2.0px;height:33.6px;background:#f2f6fa"></div>
<div class="a" style="left:47.0px;top:1601px;width:275.6px;height:34px;overflow:hidden"><div class="a" style="left:-47.0px;top:-1601px;width:2499px;height:2179px"><div class="t" style="left:49.34px;top:1606.13px;font-size:24.3px;line-height:24.3px;letter-spacing:0.913px;color:#161616">Anz.bestät.Termin niO</div></div></div>
<div class="a" style="left:323.6px;top:1601px;width:262.6px;height:34px;overflow:hidden"><div class="a" style="left:-323.6px;top:-1601px;width:2499px;height:2179px"><div class="t" style="left:327.70px;top:1606.13px;font-size:24.3px;line-height:24.3px;letter-spacing:1.311px;color:#161616">Punkte Termintreue</div></div></div>
<div class="a" style="left:587.2px;top:1601px;width:310.3px;height:34px;overflow:hidden"><div class="a" style="left:-587.2px;top:-1601px;width:2499px;height:2179px"><div class="t" style="left:592.94px;top:1606.13px;font-size:24.3px;line-height:24.3px;letter-spacing:0.673px;color:#161616">Anzahl Mengentreue i.O</div></div></div>
<div class="a" style="left:898.5px;top:1601px;width:356.5px;height:34px;overflow:hidden"><div class="a" style="left:-898.5px;top:-1601px;width:2499px;height:2179px"><div class="t" style="left:904.64px;top:1606.13px;font-size:24.3px;line-height:24.3px;letter-spacing:0.683px;color:#161616">Anzahl Mengentreue n.i.O</div></div></div>
<div class="a" style="left:1256.0px;top:1601px;width:213.6px;height:34px;overflow:hidden"><div class="a" style="left:-1256.0px;top:-1601px;width:2499px;height:2179px"><div class="t" style="left:1260.50px;top:1606.13px;font-size:24.3px;line-height:24.3px;letter-spacing:1.341px;color:#161616">Punkte</div></div></div>
<div class="a" style="left:1470.6px;top:1601px;width:214.1px;height:34px;overflow:hidden"><div class="a" style="left:-1470.6px;top:-1601px;width:2499px;height:2179px"><div class="t" style="left:1475.88px;top:1606.13px;font-size:24.3px;line-height:24.3px;letter-spacing:0.936px;color:#161616">WE-Menge</div></div></div>
<div class="a" style="left:1685.7px;top:1601px;width:213.6px;height:34px;overflow:hidden"><div class="a" style="left:-1685.7px;top:-1601px;width:2499px;height:2179px"><div class="t" style="left:1690.94px;top:1606.13px;font-size:24.3px;line-height:24.3px;letter-spacing:0.762px;color:#161616">AS-Menge</div></div></div>
<div class="a" style="left:1900.3px;top:1601px;width:213.7px;height:34px;overflow:hidden"><div class="a" style="left:-1900.3px;top:-1601px;width:2499px;height:2179px"><div class="t" style="left:1904.40px;top:1606.13px;font-size:24.3px;line-height:24.3px;letter-spacing:0.935px;color:#161616">NA-Menge</div></div></div>
<div class="a" style="left:2115.0px;top:1601px;width:283.6px;height:34px;overflow:hidden"><div class="a" style="left:-2115.0px;top:-1601px;width:2499px;height:2179px"><div class="t" style="left:2119.00px;top:1606.13px;font-size:24.3px;line-height:24.3px;letter-spacing:1.815px;color:#161616">Reklamationsmenge</div></div></div>
<div class="a" style="left:2399.6px;top:1601px;width:35.9px;height:34px;overflow:hidden"><div class="a" style="left:-2399.6px;top:-1601px;width:2499px;height:2179px"><div class="t" style="left:2403.00px;top:1606.13px;font-size:24.3px;line-height:24.3px;letter-spacing:1.000px;color:#161616">PP</div></div></div>
<div class="a" style="left:47.0px;top:1635.2px;width:2390.0px;height:408.6px;background:#f6b066"></div>
<div class="a" style="left:47.0px;top:1635.2px;width:2389.5px;height:34.0px;background:#f6af66"></div>
<div class="a" style="left:47.0px;top:1668.0px;width:2389.5px;height:2.4px;background:#cdbfb0"></div>
<div class="t" style="left:304.61px;top:1641.03px;font-size:23px;line-height:23px;letter-spacing:1.900px;color:#222">3</div>
<div class="t" style="left:530.43px;top:1641.03px;font-size:23px;line-height:23px;letter-spacing:1.900px;color:#222">0,00</div>
<div class="t" style="left:841.73px;top:1641.03px;font-size:23px;line-height:23px;letter-spacing:1.900px;color:#222">3,00</div>
<div class="t" style="left:1199.23px;top:1641.03px;font-size:23px;line-height:23px;letter-spacing:1.900px;color:#222">0,00</div>
<div class="t" style="left:1399.11px;top:1641.03px;font-size:23px;line-height:23px;letter-spacing:1.900px;color:#222">10,00</div>
<div class="t" style="left:1584.88px;top:1641.03px;font-size:23px;line-height:23px;letter-spacing:1.900px;color:#222">4000,00</div>
<div class="t" style="left:1843.53px;top:1641.03px;font-size:23px;line-height:23px;letter-spacing:1.900px;color:#222">0,00</div>
<div class="t" style="left:2058.23px;top:1641.03px;font-size:23px;line-height:23px;letter-spacing:1.900px;color:#222">0,00</div>
<div class="t" style="left:2342.83px;top:1641.03px;font-size:23px;line-height:23px;letter-spacing:1.900px;color:#222">0,00</div>
<div class="t" style="left:2422.10px;top:1641.03px;font-size:23px;line-height:23px;letter-spacing:1.900px;color:#222">0</div>
<div class="a" style="left:47.0px;top:1669.2px;width:2389.5px;height:34.0px;background:#f8bf86"></div>
<div class="a" style="left:47.0px;top:1702.1px;width:2389.5px;height:2.4px;background:#cdbfb0"></div>
<div class="t" style="left:304.27px;top:1675.08px;font-size:23px;line-height:23px;letter-spacing:1.900px;color:#222">4</div>
<div class="t" style="left:530.43px;top:1675.08px;font-size:23px;line-height:23px;letter-spacing:1.900px;color:#222">0,00</div>
<div class="t" style="left:841.73px;top:1675.08px;font-size:23px;line-height:23px;letter-spacing:1.900px;color:#222">4,00</div>
<div class="t" style="left:1199.23px;top:1675.08px;font-size:23px;line-height:23px;letter-spacing:1.900px;color:#222">1,00</div>
<div class="t" style="left:1413.83px;top:1675.08px;font-size:23px;line-height:23px;letter-spacing:1.900px;color:#222">8,00</div>
<div class="t" style="left:1584.88px;top:1675.08px;font-size:23px;line-height:23px;letter-spacing:1.900px;color:#222">2500,00</div>
<div class="t" style="left:1843.53px;top:1675.08px;font-size:23px;line-height:23px;letter-spacing:1.900px;color:#222">0,00</div>
<div class="t" style="left:2058.23px;top:1675.08px;font-size:23px;line-height:23px;letter-spacing:1.900px;color:#222">0,00</div>
<div class="t" style="left:2342.83px;top:1675.08px;font-size:23px;line-height:23px;letter-spacing:1.900px;color:#222">0,00</div>
<div class="t" style="left:2422.10px;top:1675.08px;font-size:23px;line-height:23px;letter-spacing:1.900px;color:#222">0</div>
<div class="a" style="left:47.0px;top:1703.3px;width:2389.5px;height:34.0px;background:#f6af66"></div>
<div class="a" style="left:47.0px;top:1736.1px;width:2389.5px;height:2.4px;background:#cdbfb0"></div>
<div class="t" style="left:304.73px;top:1709.13px;font-size:23px;line-height:23px;letter-spacing:1.900px;color:#222">1</div>
<div class="t" style="left:530.43px;top:1709.13px;font-size:23px;line-height:23px;letter-spacing:1.900px;color:#222">0,00</div>
<div class="t" style="left:841.73px;top:1709.13px;font-size:23px;line-height:23px;letter-spacing:1.900px;color:#222">1,00</div>
<div class="t" style="left:1199.23px;top:1709.13px;font-size:23px;line-height:23px;letter-spacing:1.900px;color:#222">0,00</div>
<div class="t" style="left:1399.11px;top:1709.13px;font-size:23px;line-height:23px;letter-spacing:1.900px;color:#222">10,00</div>
<div class="t" style="left:1584.88px;top:1709.13px;font-size:23px;line-height:23px;letter-spacing:1.900px;color:#222">1000,00</div>
<div class="t" style="left:1843.53px;top:1709.13px;font-size:23px;line-height:23px;letter-spacing:1.900px;color:#222">0,00</div>
<div class="t" style="left:2058.23px;top:1709.13px;font-size:23px;line-height:23px;letter-spacing:1.900px;color:#222">0,00</div>
<div class="t" style="left:2342.83px;top:1709.13px;font-size:23px;line-height:23px;letter-spacing:1.900px;color:#222">0,00</div>
<div class="t" style="left:2422.10px;top:1709.13px;font-size:23px;line-height:23px;letter-spacing:1.900px;color:#222">0</div>
<div class="a" style="left:47.0px;top:1737.4px;width:2389.5px;height:34.0px;background:#f8bf86"></div>
<div class="a" style="left:47.0px;top:1770.2px;width:2389.5px;height:2.4px;background:#cdbfb0"></div>
<div class="t" style="left:304.61px;top:1743.18px;font-size:23px;line-height:23px;letter-spacing:1.900px;color:#222">3</div>
<div class="t" style="left:530.43px;top:1743.18px;font-size:23px;line-height:23px;letter-spacing:1.900px;color:#222">0,00</div>
<div class="t" style="left:841.73px;top:1743.18px;font-size:23px;line-height:23px;letter-spacing:1.900px;color:#222">3,00</div>
<div class="t" style="left:1199.23px;top:1743.18px;font-size:23px;line-height:23px;letter-spacing:1.900px;color:#222">0,00</div>
<div class="t" style="left:1399.11px;top:1743.18px;font-size:23px;line-height:23px;letter-spacing:1.900px;color:#222">10,00</div>
<div class="t" style="left:1584.88px;top:1743.18px;font-size:23px;line-height:23px;letter-spacing:1.900px;color:#222">5000,00</div>
<div class="t" style="left:1843.53px;top:1743.18px;font-size:23px;line-height:23px;letter-spacing:1.900px;color:#222">0,00</div>
<div class="t" style="left:2058.23px;top:1743.18px;font-size:23px;line-height:23px;letter-spacing:1.900px;color:#222">0,00</div>
<div class="t" style="left:2342.83px;top:1743.18px;font-size:23px;line-height:23px;letter-spacing:1.900px;color:#222">0,00</div>
<div class="t" style="left:2422.10px;top:1743.18px;font-size:23px;line-height:23px;letter-spacing:1.900px;color:#222">0</div>
<div class="a" style="left:47.0px;top:1771.4px;width:2389.5px;height:34.0px;background:#f6af66"></div>
<div class="a" style="left:47.0px;top:1804.2px;width:2389.5px;height:2.4px;background:#cdbfb0"></div>
<div class="t" style="left:304.50px;top:1777.23px;font-size:23px;line-height:23px;letter-spacing:1.900px;color:#222">0</div>
<div class="t" style="left:530.43px;top:1777.23px;font-size:23px;line-height:23px;letter-spacing:1.900px;color:#222">0,00</div>
<div class="t" style="left:841.73px;top:1777.23px;font-size:23px;line-height:23px;letter-spacing:1.900px;color:#222">1,00</div>
<div class="t" style="left:1199.23px;top:1777.23px;font-size:23px;line-height:23px;letter-spacing:1.900px;color:#222">0,00</div>
<div class="t" style="left:1399.11px;top:1777.23px;font-size:23px;line-height:23px;letter-spacing:1.900px;color:#222">10,00</div>
<div class="t" style="left:1599.54px;top:1777.23px;font-size:23px;line-height:23px;letter-spacing:1.900px;color:#222">500,00</div>
<div class="t" style="left:1843.53px;top:1777.23px;font-size:23px;line-height:23px;letter-spacing:1.900px;color:#222">0,00</div>
<div class="t" style="left:2058.23px;top:1777.23px;font-size:23px;line-height:23px;letter-spacing:1.900px;color:#222">0,00</div>
<div class="t" style="left:2342.83px;top:1777.23px;font-size:23px;line-height:23px;letter-spacing:1.900px;color:#222">0,00</div>
<div class="t" style="left:2422.10px;top:1777.23px;font-size:23px;line-height:23px;letter-spacing:1.900px;color:#222">0</div>
<div class="a" style="left:47.0px;top:1805.5px;width:2389.5px;height:34.0px;background:#f8bf86"></div>
<div class="a" style="left:47.0px;top:1838.3px;width:2389.5px;height:2.4px;background:#cdbfb0"></div>
<div class="t" style="left:304.73px;top:1811.28px;font-size:23px;line-height:23px;letter-spacing:1.900px;color:#222">1</div>
<div class="t" style="left:530.43px;top:1811.28px;font-size:23px;line-height:23px;letter-spacing:1.900px;color:#222">0,00</div>
<div class="t" style="left:841.73px;top:1811.28px;font-size:23px;line-height:23px;letter-spacing:1.900px;color:#222">2,00</div>
<div class="t" style="left:1199.23px;top:1811.28px;font-size:23px;line-height:23px;letter-spacing:1.900px;color:#222">0,00</div>
<div class="t" style="left:1399.11px;top:1811.28px;font-size:23px;line-height:23px;letter-spacing:1.900px;color:#222">10,00</div>
<div class="t" style="left:1584.88px;top:1811.28px;font-size:23px;line-height:23px;letter-spacing:1.900px;color:#222">2475,00</div>
<div class="t" style="left:1843.53px;top:1811.28px;font-size:23px;line-height:23px;letter-spacing:1.900px;color:#222">0,00</div>
<div class="t" style="left:2058.23px;top:1811.28px;font-size:23px;line-height:23px;letter-spacing:1.900px;color:#222">0,00</div>
<div class="t" style="left:2342.83px;top:1811.28px;font-size:23px;line-height:23px;letter-spacing:1.900px;color:#222">0,00</div>
<div class="t" style="left:2422.10px;top:1811.28px;font-size:23px;line-height:23px;letter-spacing:1.900px;color:#222">0</div>
<div class="a" style="left:47.0px;top:1839.5px;width:2389.5px;height:34.0px;background:#f6af66"></div>
<div class="a" style="left:47.0px;top:1872.3px;width:2389.5px;height:2.4px;background:#cdbfb0"></div>
<div class="t" style="left:304.79px;top:1845.33px;font-size:23px;line-height:23px;letter-spacing:1.900px;color:#222">2</div>
<div class="t" style="left:530.43px;top:1845.33px;font-size:23px;line-height:23px;letter-spacing:1.900px;color:#222">0,00</div>
<div class="t" style="left:841.73px;top:1845.33px;font-size:23px;line-height:23px;letter-spacing:1.900px;color:#222">3,00</div>
<div class="t" style="left:1199.23px;top:1845.33px;font-size:23px;line-height:23px;letter-spacing:1.900px;color:#222">0,00</div>
<div class="t" style="left:1399.11px;top:1845.33px;font-size:23px;line-height:23px;letter-spacing:1.900px;color:#222">10,00</div>
<div class="t" style="left:1584.88px;top:1845.33px;font-size:23px;line-height:23px;letter-spacing:1.900px;color:#222">3500,00</div>
<div class="t" style="left:1843.53px;top:1845.33px;font-size:23px;line-height:23px;letter-spacing:1.900px;color:#222">0,00</div>
<div class="t" style="left:2058.23px;top:1845.33px;font-size:23px;line-height:23px;letter-spacing:1.900px;color:#222">0,00</div>
<div class="t" style="left:2342.83px;top:1845.33px;font-size:23px;line-height:23px;letter-spacing:1.900px;color:#222">0,00</div>
<div class="t" style="left:2422.10px;top:1845.33px;font-size:23px;line-height:23px;letter-spacing:1.900px;color:#222">0</div>
<div class="a" style="left:47.0px;top:1873.5px;width:2389.5px;height:34.0px;background:#f8bf86"></div>
<div class="a" style="left:47.0px;top:1906.4px;width:2389.5px;height:2.4px;background:#cdbfb0"></div>
<div class="t" style="left:304.50px;top:1879.38px;font-size:23px;line-height:23px;letter-spacing:1.900px;color:#222">0</div>
<div class="t" style="left:530.43px;top:1879.38px;font-size:23px;line-height:23px;letter-spacing:1.900px;color:#222">0,00</div>
<div class="t" style="left:841.73px;top:1879.38px;font-size:23px;line-height:23px;letter-spacing:1.900px;color:#222">1,00</div>
<div class="t" style="left:1199.23px;top:1879.38px;font-size:23px;line-height:23px;letter-spacing:1.900px;color:#222">0,00</div>
<div class="t" style="left:1399.11px;top:1879.38px;font-size:23px;line-height:23px;letter-spacing:1.900px;color:#222">10,00</div>
<div class="t" style="left:1584.88px;top:1879.38px;font-size:23px;line-height:23px;letter-spacing:1.900px;color:#222">1000,00</div>
<div class="t" style="left:1843.53px;top:1879.38px;font-size:23px;line-height:23px;letter-spacing:1.900px;color:#222">0,00</div>
<div class="t" style="left:2058.23px;top:1879.38px;font-size:23px;line-height:23px;letter-spacing:1.900px;color:#222">0,00</div>
<div class="t" style="left:2342.83px;top:1879.38px;font-size:23px;line-height:23px;letter-spacing:1.900px;color:#222">0,00</div>
<div class="t" style="left:2422.10px;top:1879.38px;font-size:23px;line-height:23px;letter-spacing:1.900px;color:#222">0</div>
<div class="a" style="left:47.0px;top:1907.6px;width:2389.5px;height:34.0px;background:#f6af66"></div>
<div class="a" style="left:47.0px;top:1940.4px;width:2389.5px;height:2.4px;background:#cdbfb0"></div>
<div class="t" style="left:304.73px;top:1913.43px;font-size:23px;line-height:23px;letter-spacing:1.900px;color:#222">1</div>
<div class="t" style="left:530.43px;top:1913.43px;font-size:23px;line-height:23px;letter-spacing:1.900px;color:#222">0,00</div>
<div class="t" style="left:841.73px;top:1913.43px;font-size:23px;line-height:23px;letter-spacing:1.900px;color:#222">1,00</div>
<div class="t" style="left:1199.23px;top:1913.43px;font-size:23px;line-height:23px;letter-spacing:1.900px;color:#222">0,00</div>
<div class="t" style="left:1399.11px;top:1913.43px;font-size:23px;line-height:23px;letter-spacing:1.900px;color:#222">10,00</div>
<div class="t" style="left:1584.88px;top:1913.43px;font-size:23px;line-height:23px;letter-spacing:1.900px;color:#222">1000,00</div>
<div class="t" style="left:1843.53px;top:1913.43px;font-size:23px;line-height:23px;letter-spacing:1.900px;color:#222">0,00</div>
<div class="t" style="left:2058.23px;top:1913.43px;font-size:23px;line-height:23px;letter-spacing:1.900px;color:#222">0,00</div>
<div class="t" style="left:2342.83px;top:1913.43px;font-size:23px;line-height:23px;letter-spacing:1.900px;color:#222">0,00</div>
<div class="t" style="left:2422.10px;top:1913.43px;font-size:23px;line-height:23px;letter-spacing:1.900px;color:#222">0</div>
<div class="a" style="left:47.0px;top:1941.7px;width:2389.5px;height:34.0px;background:#f8bf86"></div>
<div class="a" style="left:47.0px;top:1974.5px;width:2389.5px;height:2.4px;background:#cdbfb0"></div>
<div class="t" style="left:304.73px;top:1947.48px;font-size:23px;line-height:23px;letter-spacing:1.900px;color:#222">1</div>
<div class="t" style="left:530.43px;top:1947.48px;font-size:23px;line-height:23px;letter-spacing:1.900px;color:#222">0,00</div>
<div class="t" style="left:841.73px;top:1947.48px;font-size:23px;line-height:23px;letter-spacing:1.900px;color:#222">1,00</div>
<div class="t" style="left:1199.23px;top:1947.48px;font-size:23px;line-height:23px;letter-spacing:1.900px;color:#222">0,00</div>
<div class="t" style="left:1399.11px;top:1947.48px;font-size:23px;line-height:23px;letter-spacing:1.900px;color:#222">10,00</div>
<div class="t" style="left:1584.88px;top:1947.48px;font-size:23px;line-height:23px;letter-spacing:1.900px;color:#222">2000,00</div>
<div class="t" style="left:1843.53px;top:1947.48px;font-size:23px;line-height:23px;letter-spacing:1.900px;color:#222">0,00</div>
<div class="t" style="left:2058.23px;top:1947.48px;font-size:23px;line-height:23px;letter-spacing:1.900px;color:#222">0,00</div>
<div class="t" style="left:2342.83px;top:1947.48px;font-size:23px;line-height:23px;letter-spacing:1.900px;color:#222">0,00</div>
<div class="t" style="left:2422.10px;top:1947.48px;font-size:23px;line-height:23px;letter-spacing:1.900px;color:#222">0</div>
<div class="a" style="left:47.0px;top:1975.7px;width:2389.5px;height:34.0px;background:#f6af66"></div>
<div class="a" style="left:47.0px;top:2008.5px;width:2389.5px;height:2.4px;background:#cdbfb0"></div>
<div class="t" style="left:304.73px;top:1981.53px;font-size:23px;line-height:23px;letter-spacing:1.900px;color:#222">1</div>
<div class="t" style="left:530.43px;top:1981.53px;font-size:23px;line-height:23px;letter-spacing:1.900px;color:#222">0,00</div>
<div class="t" style="left:841.73px;top:1981.53px;font-size:23px;line-height:23px;letter-spacing:1.900px;color:#222">2,00</div>
<div class="t" style="left:1199.23px;top:1981.53px;font-size:23px;line-height:23px;letter-spacing:1.900px;color:#222">0,00</div>
<div class="t" style="left:1399.11px;top:1981.53px;font-size:23px;line-height:23px;letter-spacing:1.900px;color:#222">10,00</div>
<div class="t" style="left:1584.88px;top:1981.53px;font-size:23px;line-height:23px;letter-spacing:1.900px;color:#222">1950,00</div>
<div class="t" style="left:1843.53px;top:1981.53px;font-size:23px;line-height:23px;letter-spacing:1.900px;color:#222">0,00</div>
<div class="t" style="left:2058.23px;top:1981.53px;font-size:23px;line-height:23px;letter-spacing:1.900px;color:#222">0,00</div>
<div class="t" style="left:2342.83px;top:1981.53px;font-size:23px;line-height:23px;letter-spacing:1.900px;color:#222">0,00</div>
<div class="t" style="left:2422.10px;top:1981.53px;font-size:23px;line-height:23px;letter-spacing:1.900px;color:#222">0</div>
<div class="a" style="left:47.0px;top:2009.8px;width:2389.5px;height:34.0px;background:#f8bf86"></div>
<div class="a" style="left:47.0px;top:2042.6px;width:2389.5px;height:2.4px;background:#cdbfb0"></div>
<div class="t" style="left:304.79px;top:2015.58px;font-size:23px;line-height:23px;letter-spacing:1.900px;color:#222">2</div>
<div class="t" style="left:530.43px;top:2015.58px;font-size:23px;line-height:23px;letter-spacing:1.900px;color:#222">0,00</div>
<div class="t" style="left:841.73px;top:2015.58px;font-size:23px;line-height:23px;letter-spacing:1.900px;color:#222">2,00</div>
<div class="t" style="left:1199.23px;top:2015.58px;font-size:23px;line-height:23px;letter-spacing:1.900px;color:#222">0,00</div>
<div class="t" style="left:1399.11px;top:2015.58px;font-size:23px;line-height:23px;letter-spacing:1.900px;color:#222">10,00</div>
<div class="t" style="left:1584.88px;top:2015.58px;font-size:23px;line-height:23px;letter-spacing:1.900px;color:#222">4000,00</div>
<div class="t" style="left:1843.53px;top:2015.58px;font-size:23px;line-height:23px;letter-spacing:1.900px;color:#222">0,00</div>
<div class="t" style="left:2058.23px;top:2015.58px;font-size:23px;line-height:23px;letter-spacing:1.900px;color:#222">0,00</div>
<div class="t" style="left:2342.83px;top:2015.58px;font-size:23px;line-height:23px;letter-spacing:1.900px;color:#222">0,00</div>
<div class="t" style="left:2422.10px;top:2015.58px;font-size:23px;line-height:23px;letter-spacing:1.900px;color:#222">0</div>
<div class="a" style="left:322.6px;top:1635.2px;width:2.0px;height:408.6px;background:#d0c4b6"></div>
<div class="a" style="left:586.2px;top:1635.2px;width:2.0px;height:408.6px;background:#d0c4b6"></div>
<div class="a" style="left:897.5px;top:1635.2px;width:2.0px;height:408.6px;background:#d0c4b6"></div>
<div class="a" style="left:1255.0px;top:1635.2px;width:2.0px;height:408.6px;background:#d0c4b6"></div>
<div class="a" style="left:1469.6px;top:1635.2px;width:2.0px;height:408.6px;background:#d0c4b6"></div>
<div class="a" style="left:1684.7px;top:1635.2px;width:2.0px;height:408.6px;background:#d0c4b6"></div>
<div class="a" style="left:1899.3px;top:1635.2px;width:2.0px;height:408.6px;background:#d0c4b6"></div>
<div class="a" style="left:2114.0px;top:1635.2px;width:2.0px;height:408.6px;background:#d0c4b6"></div>
<div class="a" style="left:2398.6px;top:1635.2px;width:2.0px;height:408.6px;background:#d0c4b6"></div>
<div class="a" style="left:2436.5px;top:1601.0px;width:35.5px;height:444.0px;background:linear-gradient(to right,#f4f4ee,#fbfbf8)"></div>
<div class="a" style="left:2440.0px;top:1602.0px;width:30.0px;height:28.0px;background:linear-gradient(to right,#dfe8f7 0%,#cbdaf3 50%,#b8cbee 100%);border:1.5px solid #b4c6e6;border-radius:4px"></div>
<svg class="a" style="left:2440px;top:1602px" width="30" height="28" viewBox="0 0 30 28"><path d="M9 17 L15 11 L21 17" stroke="#4d6185" stroke-width="3" fill="none"/></svg>
<div class="a" style="left:2440.0px;top:1635.0px;width:30.0px;height:117.0px;background:linear-gradient(to right,#dfe8f7 0%,#cbdaf3 50%,#b8cbee 100%);border:1.5px solid #b4c6e6;border-radius:5px"></div>
<svg class="a" style="left:2440px;top:1680px" width="30" height="24" viewBox="0 0 30 24"><g stroke="#aebfe0" stroke-width="1.4"><path d="M9 7 L21 7 M9 10 L21 10 M9 13 L21 13 M9 16 L21 16"/></g></svg>
<div class="a" style="left:2441.0px;top:2016.0px;width:28.4px;height:28.6px;background:linear-gradient(to right,#dfe8f7 0%,#cbdaf3 50%,#b8cbee 100%);border:1.5px solid #b4c6e6;border-radius:4px"></div>
<svg class="a" style="left:2441px;top:2016px" width="28" height="28" viewBox="0 0 28 28"><path d="M8 11 L14 17 L20 11" stroke="#4d6185" stroke-width="3" fill="none"/></svg>
<div class="a" style="left:47.0px;top:2045.0px;width:2386.0px;height:32.5px;background:linear-gradient(to bottom,#f4f4ee,#fcfcfa)"></div>
<div class="a" style="left:2433.0px;top:2045.0px;width:39.0px;height:32.5px;background:#ecead8"></div>
<div class="a" style="left:47.0px;top:2047.0px;width:28.4px;height:30.0px;background:linear-gradient(to bottom,#dfe8f7 0%,#cbdaf3 50%,#b8cbee 100%);border:1.5px solid #b4c6e6;border-radius:4px"></div>
<svg class="a" style="left:47px;top:2047px" width="28" height="30" viewBox="0 0 28 30"><path d="M16 9 L10 15 L16 21" stroke="#4d6185" stroke-width="3" fill="none"/></svg>
<div class="a" style="left:1869.7px;top:2047.0px;width:32.3px;height:30.0px;background:linear-gradient(to bottom,#dfe8f7 0%,#cbdaf3 50%,#b8cbee 100%);border:1.5px solid #b4c6e6;border-radius:5px"></div>
<svg class="a" style="left:1869.7px;top:2047px" width="32" height="30" viewBox="0 0 32 30"><g stroke="#aebfe0" stroke-width="1.4"><path d="M10 10 L10 20 M13 10 L13 20 M16 10 L16 20 M19 10 L19 20 M22 10 L22 20"/></g></svg>
<div class="a" style="left:2401.0px;top:2047.0px;width:32.3px;height:30.0px;background:linear-gradient(to bottom,#dfe8f7 0%,#cbdaf3 50%,#b8cbee 100%);border:1.5px solid #b4c6e6;border-radius:4px"></div>
<svg class="a" style="left:2401px;top:2047px" width="32" height="30" viewBox="0 0 32 30"><path d="M13 9 L19 15 L13 21" stroke="#4d6185" stroke-width="3" fill="none"/></svg>
<div class="a" style="left:47.0px;top:2087.7px;width:928.0px;height:41.3px;background:#fff;border:1.5px solid #8a8a8a;border-left:none;border-right:2px solid #8a8a8a"></div>
<div class="t" style="left:49.00px;top:2096.43px;font-size:23px;line-height:23px;letter-spacing:1.734px;color:#301818">Bitte Datensatz auswählen</div>
<div class="a" style="left:2074.8px;top:2090.5px;width:49.0px;height:49.3px;background:#a9a9aa;border:1.5px solid #5a5a5a;border-radius:4px;box-shadow:inset 0 0 0 1.5px #f0f0f0"></div>
<div class="a" style="left:2142.0px;top:2090.5px;width:49.0px;height:49.3px;background:#a9a9aa;border:1.5px solid #5a5a5a;border-radius:4px;box-shadow:inset 0 0 0 1.5px #f0f0f0"></div>
<div class="a" style="left:2208.0px;top:2090.5px;width:49.0px;height:49.3px;background:#a9a9aa;border:1.5px solid #5a5a5a;border-radius:4px;box-shadow:inset 0 0 0 1.5px #f0f0f0"></div>
<div class="a" style="left:2275.5px;top:2090.5px;width:49.0px;height:49.3px;background:#a9a9aa;border:1.5px solid #5a5a5a;border-radius:4px;box-shadow:inset 0 0 0 1.5px #f0f0f0"></div>
<div class="a" style="left:2342.5px;top:2090.5px;width:49.0px;height:49.3px;background:#a9a9aa;border:1.5px solid #5a5a5a;border-radius:4px;box-shadow:inset 0 0 0 1.5px #f0f0f0"></div>
<div class="a" style="left:2409.0px;top:2090.5px;width:49.0px;height:49.3px;background:#a9a9aa;border:1.5px solid #5a5a5a;border-radius:4px;box-shadow:inset 0 0 0 1.5px #f0f0f0"></div>
</body></html>
